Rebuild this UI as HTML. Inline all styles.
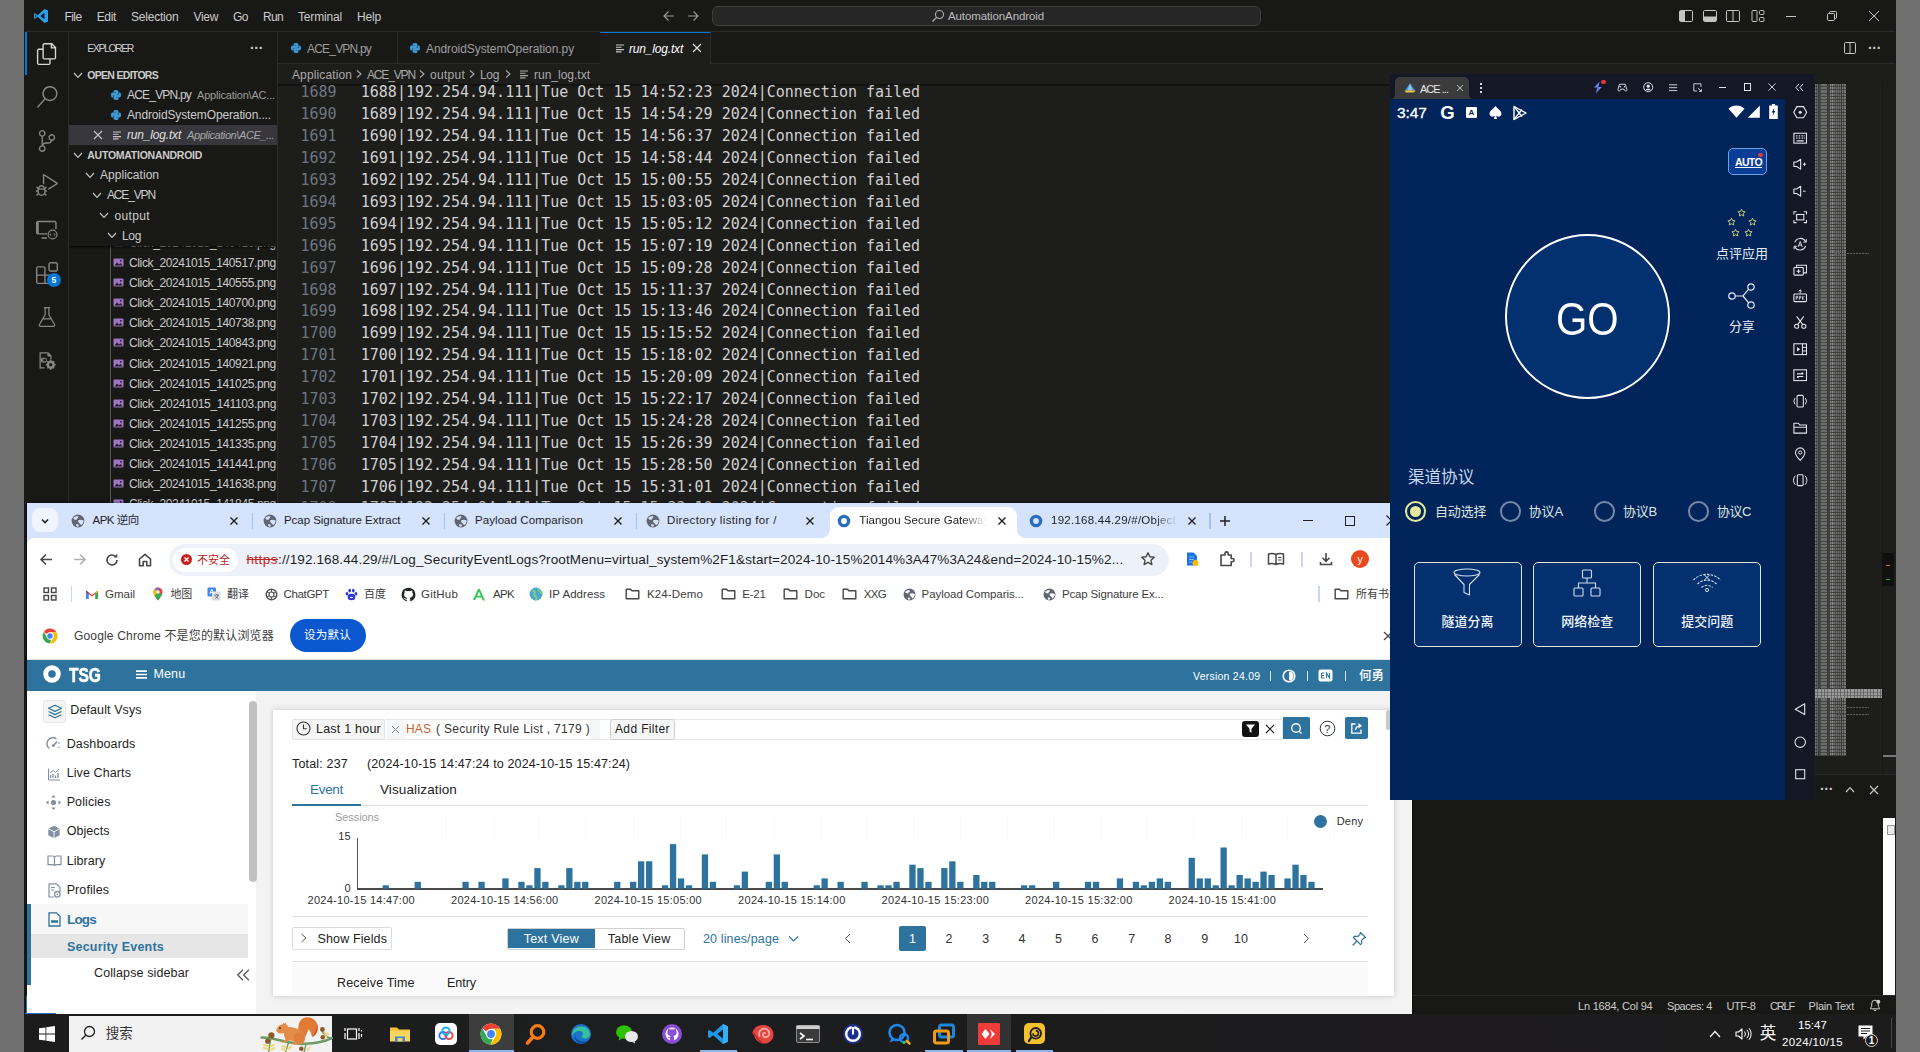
<!DOCTYPE html>
<html lang="zh"><head><meta charset="utf-8"><title>screen</title>
<style>
*{margin:0;padding:0;box-sizing:content-box}
html,body{width:1920px;height:1052px;overflow:hidden;background:#6f6f6f}
body{position:relative;font-family:"Liberation Sans","Noto Sans CJK SC",sans-serif}
.b{position:absolute;display:block}
.t{position:absolute;white-space:pre;display:block}
.s{font-family:"Liberation Sans","Noto Sans CJK SC",sans-serif}
.m{font-family:"Liberation Mono","Noto Sans CJK SC",monospace}
.dm{font-family:"DejaVu Sans Mono","Liberation Mono",monospace}
.ds{font-family:"DejaVu Sans","Noto Sans CJK SC",sans-serif}
svg{overflow:visible}
</style></head>
<body>
<div class="b" style="left:24.4px;top:0.0px;width:1871.3px;height:1013.5px;background:#181816;"></div><div class="b" style="left:277.0px;top:32.0px;width:1618.8px;height:963.0px;background:#1d1d1b;"></div><div class="b" style="left:25.0px;top:31.0px;width:1870.0px;height:1.0px;background:#2b2b2b;"></div><div class="b" style="left:68.0px;top:32.0px;width:1.0px;height:963.0px;background:#2b2b2b;"></div><div class="b" style="left:277.0px;top:32.0px;width:1.0px;height:963.0px;background:#2b2b2b;"></div><svg class="b" style="left:33.0px;top:8.0px;" width="16" height="16" viewBox="0 0 16 16"><path d="M11.5 1 L4.6 7.3 1.9 5.2 1 5.7v4.6l.9.5 2.7-2.1 6.9 6.3 3.5-1.6V2.6z M11.5 4.8v6.4L7.3 8z M1.9 9.6V6.4L3.5 8z" fill="#2ba0ef" fill-rule="evenodd"/></svg><span class="t s" style="left:64.4px;top:8.8px;font-size:12px;line-height:16px;color:#cccccc;letter-spacing:-0.51px;">File</span><span class="t s" style="left:96.7px;top:8.8px;font-size:12px;line-height:16px;color:#cccccc;letter-spacing:-0.34px;">Edit</span><span class="t s" style="left:131.0px;top:8.8px;font-size:12px;line-height:16px;color:#cccccc;letter-spacing:-0.21px;">Selection</span><span class="t s" style="left:193.5px;top:8.8px;font-size:12px;line-height:16px;color:#cccccc;letter-spacing:-0.32px;">View</span><span class="t s" style="left:233.0px;top:8.8px;font-size:12px;line-height:16px;color:#cccccc;letter-spacing:-0.50px;">Go</span><span class="t s" style="left:263.0px;top:8.8px;font-size:12px;line-height:16px;color:#cccccc;letter-spacing:-0.67px;">Run</span><span class="t s" style="left:298.0px;top:8.8px;font-size:12px;line-height:16px;color:#cccccc;letter-spacing:-0.17px;">Terminal</span><span class="t s" style="left:357.0px;top:8.8px;font-size:12px;line-height:16px;color:#cccccc;letter-spacing:-0.17px;">Help</span><svg class="b" style="left:661.0px;top:8.0px;" width="16" height="16" viewBox="0 0 16 16"><path d="M13 8H3.5M7.5 3.5 3 8l4.5 4.5" fill="none" stroke="#9a9a9a" stroke-width="1.1"/></svg><svg class="b" style="left:685.0px;top:8.0px;transform:scaleX(-1);" width="16" height="16" viewBox="0 0 16 16"><path d="M13 8H3.5M7.5 3.5 3 8l4.5 4.5" fill="none" stroke="#9a9a9a" stroke-width="1.1"/></svg><div class="b" style="left:711.5px;top:5.5px;width:549.0px;height:20.5px;background:#262626;border:1px solid #3e3e3e;border-radius:6px;box-sizing:border-box;"></div><svg class="b" style="left:931.0px;top:8.5px;" width="14" height="14" viewBox="0 0 14 14"><circle cx="8.5" cy="5.5" r="4" fill="none" stroke="#b4b4b4" stroke-width="1.1"/><path d="M5.6 8.4 1.5 12.5" stroke="#b4b4b4" stroke-width="1.2"/></svg><span class="t s" style="left:948.0px;top:8.7px;font-size:11.5px;line-height:15px;color:#bdbdbd;letter-spacing:-0.11px;">AutomationAndroid</span><svg class="b" style="left:1678.0px;top:8.0px;" width="16" height="16" viewBox="0 0 16 16"><rect x="1.5" y="2.5" width="13" height="11" rx="1.2" fill="none" stroke="#c4c4c4" stroke-width="1"/><rect x="2" y="3" width="5" height="10" fill="#c4c4c4"/></svg><svg class="b" style="left:1701.6px;top:8.0px;" width="16" height="16" viewBox="0 0 16 16"><rect x="1.5" y="2.5" width="13" height="11" rx="1.2" fill="none" stroke="#c4c4c4" stroke-width="1"/><rect x="2" y="8.5" width="12" height="4.5" fill="#c4c4c4"/></svg><svg class="b" style="left:1725.0px;top:8.0px;" width="16" height="16" viewBox="0 0 16 16"><rect x="1.5" y="2.5" width="13" height="11" rx="1.2" fill="none" stroke="#c4c4c4" stroke-width="1"/><path d="M8 2.5v11" stroke="#c4c4c4"/></svg><svg class="b" style="left:1749.5px;top:8.0px;" width="16" height="16" viewBox="0 0 16 16"><rect x="2" y="2.5" width="5" height="11" rx="1" fill="none" stroke="#c4c4c4"/><rect x="9.5" y="2.5" width="4.5" height="4" rx="1" fill="none" stroke="#c4c4c4"/><rect x="9.5" y="9.5" width="4.5" height="4" rx="1" fill="none" stroke="#c4c4c4"/></svg><div class="b" style="left:1786.0px;top:16.0px;width:10.0px;height:1.0px;background:#c4c4c4;"></div><svg class="b" style="left:1826.0px;top:10.0px;" width="12" height="12" viewBox="0 0 12 12"><rect x="1.5" y="3.5" width="7" height="7" rx="1" fill="none" stroke="#c4c4c4"/><path d="M3.5 3.5v-1a1 1 0 0 1 1-1h5a1 1 0 0 1 1 1v5a1 1 0 0 1-1 1h-1" fill="none" stroke="#c4c4c4"/></svg><svg class="b" style="left:1868.0px;top:10.0px;" width="12" height="12" viewBox="0 0 12 12"><path d="M1 1l10 10M11 1L1 11" stroke="#c4c4c4" stroke-width="1"/></svg><div class="b" style="left:24.5px;top:32.0px;width:2.0px;height:43.0px;background:#0078d4;"></div><svg class="b" style="left:35.7px;top:42.6px;" width="22" height="22" viewBox="0 0 24 24"><path d="M17.5 0h-9L7 1.5V6H2.5L1 7.5v15.07L2.5 24h12.07L16 22.57V18h4.7l1.3-1.43V4.5L17.5 0zm0 2.12l2.38 2.38H17.5V2.12zm-3 20.38h-12v-15H7v9.07L8.5 18h6v4.5zm6-6h-12v-15H16V6h4.5v10.5z" fill="#d7d7d7"/></svg><svg class="b" style="left:35.7px;top:86.0px;" width="22" height="22" viewBox="0 0 24 24"><path d="M15.25 0a8.25 8.25 0 0 0-6.18 13.72L1 22.88l1.12 1 8.05-9.12A8.251 8.251 0 1 0 15.25.01V0zm0 15a6.75 6.75 0 1 1 0-13.5 6.75 6.75 0 0 1 0 13.5z" fill="#868686"/></svg><svg class="b" style="left:35.7px;top:130.0px;" width="22" height="22" viewBox="0 0 24 24"><path d="M21.007 8.222A3.738 3.738 0 0 0 15.045 5.2a3.737 3.737 0 0 0 1.156 6.583 2.988 2.988 0 0 1-2.668 1.67h-2.99a4.456 4.456 0 0 0-2.989 1.165V7.4a3.737 3.737 0 1 0-1.494 0v9.117a3.776 3.776 0 1 0 1.816.099 2.99 2.99 0 0 1 2.668-1.667h2.99a4.484 4.484 0 0 0 4.223-3.039 3.736 3.736 0 0 0 3.25-3.687zM4.565 3.738a2.242 2.242 0 1 1 4.484 0 2.242 2.242 0 0 1-4.484 0zm4.484 16.441a2.242 2.242 0 1 1-4.484 0 2.242 2.242 0 0 1 4.484 0zm8.221-9.715a2.242 2.242 0 1 1 0-4.485 2.242 2.242 0 0 1 0 4.485z" fill="#868686"/></svg><svg class="b" style="left:35.7px;top:174.0px;" width="22" height="22" viewBox="0 0 24 24"><path d="M10.94 13.5l-1.32 1.32a3.73 3.73 0 0 0-7.24 0L1.06 13.5 0 14.56l1.72 1.72-.22.22V18H0v1.5h1.5v.08c.077.489.214.966.41 1.42L0 22.94 1.06 24l1.65-1.65A4.308 4.308 0 0 0 6 24a4.31 4.31 0 0 0 3.29-1.65L10.94 24 12 22.94 10.09 21c.198-.464.336-.951.41-1.45v-.1H12V18h-1.5v-1.5l-.22-.22L12 14.56l-1.06-1.06zM6 13.5a2.25 2.25 0 0 1 2.25 2.25h-4.5A2.25 2.25 0 0 1 6 13.5zm3 6a3.33 3.33 0 0 1-3 3 3.33 3.33 0 0 1-3-3v-2.25h6v2.25zm14.76-9.9v1.26L13.5 17.37V15.6l8.5-5.37L9 2v9.46a5.07 5.07 0 0 0-1.5-.72V.63L8.64 0l15.12 9.6z" fill="#868686"/></svg><svg class="b" style="left:35.7px;top:218.0px;" width="22" height="22" viewBox="0 0 24 24"><path d="M1.5 3h19.5l1.5 1.5V12h-1.5V4.500H3V16.500h9v1.500H1.500L0 16.500V4.500L1.500 3zM6 21h6v1.500H6V21z M18 12.500a5.500 5.500 0 1 0 0 11 5.500 5.500 0 0 0 0-11zm0 1.300a4.200 4.200 0 1 1 0 8.400 4.200 4.200 0 0 1 0-8.400z M16.300 16.300l-1.700 1.700 1.700 1.700.6-.6-1.100-1.100 1.100-1.100z M19.700 16.300l1.700 1.700-1.700 1.700-.6-.6 1.100-1.100-1.100-1.100z" fill="#868686" fill-rule="evenodd"/></svg><svg class="b" style="left:35.7px;top:262.0px;" width="22" height="22" viewBox="0 0 24 24"><path d="M13.5 1.500L15 0h7.500L24 1.500V9l-1.500 1.500H15L13.500 9V1.500zm1.500 0V9h7.500V1.500H15zM0 15V6l1.500-1.500H9L10.500 6v7.500H18l1.500 1.500v7.500L18 24H1.500L0 22.500V15zm9-1.500V6H1.500v7.500H9zM9 15H1.500v7.500H9V15zm1.500 7.500H18V15h-7.500v7.500z" fill="#868686" fill-rule="evenodd"/></svg><div class="b" style="left:47.0px;top:273.0px;width:14.0px;height:14.0px;background:#0078d4;border-radius:7px;"></div><span class="t s" style="left:51.6px;top:274.7px;font-size:8.5px;line-height:11px;color:#ffffff;font-weight:bold;">5</span><svg class="b" style="left:36.7px;top:307.0px;" width="20" height="20" viewBox="0 0 24 24"><path d="M8.250 0v1.500H9V9L2.300 20.700A2.200 2.200 0 0 0 4.200 24h15.600a2.200 2.200 0 0 0 1.900-3.300L15 9V1.500h.750V0h-7.500zm2.250 9.400V1.500h3v7.900l2.300 4.100H8.200l2.300-4.100zM7.300 15h9.400l3.700 6.400a.700.700 0 0 1-.600 1.100H4.200a.700.700 0 0 1-.600-1.100L7.300 15z" fill="#868686" fill-rule="evenodd"/></svg><svg class="b" style="left:36.7px;top:350.5px;" width="20" height="20" viewBox="0 0 24 24"><path d="M3 1.500h10.500l4 4V10H16V6.500h-3.500V3H4.500v16.500H9V21H3V1.500z M6.500 8.500h2.300a3 3 0 1 0 0 5H6.500 M16.500 11.500a5 5 0 1 0 0 10 5 5 0 0 0 0-10zm0 3a2 2 0 1 1 0 4 2 2 0 0 1 0-4z" fill="#868686" fill-rule="evenodd"/><circle cx="9" cy="11" r="2.300" fill="none" stroke="#868686" stroke-width="1.300"/><path d="M16.500 10.300v2M16.500 20.700v2M10.500 16.500h2M20.500 16.500h2M12.300 12.300l1.400 1.400M19.300 19.300l1.400 1.400M12.300 20.700l1.400-1.400M19.300 13.700l1.400-1.400" stroke="#868686" stroke-width="1.500"/></svg><span class="t s" style="left:87.3px;top:41.2px;font-size:10.5px;line-height:14px;color:#cccccc;letter-spacing:-1.44px;">EXPLORER</span><span class="t s" style="left:250.0px;top:39.1px;font-size:14px;line-height:18px;color:#cccccc;letter-spacing:-0.33px;font-weight:bold;">···</span><svg class="b" style="left:72.0px;top:68.5px;" width="12" height="12" viewBox="0 0 12 12"><path d="M2 4l4 4.300L10 4" fill="none" stroke="#c5c5c5" stroke-width="1.200"/></svg><span class="t s" style="left:87.3px;top:67.6px;font-size:10.5px;line-height:14px;color:#cccccc;letter-spacing:-0.70px;font-weight:bold;">OPEN EDITORS</span><svg class="b" style="left:109.8px;top:88.5px;" width="12" height="12" viewBox="0 0 12 12"><path d="M5.900 1C3.500 1 3.600 2.100 3.600 2.100v1.100h2.400v.400H2.600S1 3.400 1 6s1.400 2.500 1.400 2.500h.900V7.300s0-1.400 1.400-1.400h2.400s1.300 0 1.300-1.300V2.400S8.600 1 5.900 1z" fill="#3c99d4"/><path d="M6.100 11c2.400 0 2.300-1.100 2.300-1.100V8.800H6v-.400h3.400S11 8.600 11 6 9.600 3.500 9.600 3.500h-.900v1.200s0 1.400-1.400 1.400H4.900s-1.300 0-1.300 1.300v2.200S3.400 11 6.100 11z" fill="#3c99d4"/></svg><span class="t s" style="left:127.0px;top:87.1px;font-size:12px;line-height:16px;color:#cccccc;letter-spacing:-0.80px;">ACE_VPN.py</span><span class="t s" style="left:197.0px;top:88.4px;font-size:11px;line-height:14px;color:#9d9d9d;letter-spacing:-0.20px;">Application\AC...</span><svg class="b" style="left:109.8px;top:108.5px;" width="12" height="12" viewBox="0 0 12 12"><path d="M5.900 1C3.500 1 3.600 2.100 3.600 2.100v1.100h2.400v.400H2.600S1 3.400 1 6s1.400 2.500 1.400 2.500h.900V7.300s0-1.400 1.400-1.400h2.400s1.300 0 1.300-1.300V2.400S8.600 1 5.900 1z" fill="#3c99d4"/><path d="M6.100 11c2.400 0 2.300-1.100 2.300-1.100V8.800H6v-.400h3.400S11 8.600 11 6 9.600 3.500 9.600 3.500h-.900v1.200s0 1.400-1.400 1.400H4.900s-1.300 0-1.300 1.300v2.200S3.400 11 6.100 11z" fill="#3c99d4"/></svg><span class="t s" style="left:127.0px;top:107.0px;font-size:12px;line-height:16px;color:#cccccc;letter-spacing:-0.13px;">AndroidSystemOperation....</span><div class="b" style="left:69.0px;top:124.5px;width:208.0px;height:20.0px;background:#37373d;"></div><svg class="b" style="left:93.0px;top:129.7px;" width="10" height="10" viewBox="0 0 10 10"><path d="M1 1l8 8M9 1L1 9" stroke="#c5c5c5" stroke-width="1.100"/></svg><svg class="b" style="left:112.0px;top:129.7px;" width="10" height="10" viewBox="0 0 10 10"><path d="M1 2h8M1 4.300h5.500M1 6.600h8M1 8.900h5.500" stroke="#c5c5c5" stroke-width="1.100"/></svg><span class="t s" style="left:127.0px;top:127.1px;font-size:12px;line-height:16px;color:#e0e0e0;letter-spacing:-0.18px;font-style:italic;">run_log.txt</span><span class="t s" style="left:187.0px;top:128.4px;font-size:11px;line-height:14px;color:#a8a8a8;letter-spacing:-0.41px;font-style:italic;">Application\ACE_...</span><svg class="b" style="left:72.0px;top:149.0px;" width="12" height="12" viewBox="0 0 12 12"><path d="M2 4l4 4.300L10 4" fill="none" stroke="#c5c5c5" stroke-width="1.200"/></svg><span class="t s" style="left:87.3px;top:148.2px;font-size:10.5px;line-height:14px;color:#cccccc;letter-spacing:-0.26px;font-weight:bold;">AUTOMATIONANDROID</span><svg class="b" style="left:84.0px;top:169.2px;" width="12" height="12" viewBox="0 0 12 12"><path d="M2 4l4 4.300L10 4" fill="none" stroke="#c5c5c5" stroke-width="1.200"/></svg><span class="t s" style="left:100.0px;top:167.4px;font-size:12px;line-height:16px;color:#cccccc;letter-spacing:0.03px;">Application</span><svg class="b" style="left:91.0px;top:189.2px;" width="12" height="12" viewBox="0 0 12 12"><path d="M2 4l4 4.300L10 4" fill="none" stroke="#c5c5c5" stroke-width="1.200"/></svg><span class="t s" style="left:107.0px;top:187.4px;font-size:12px;line-height:16px;color:#cccccc;letter-spacing:-1.15px;">ACE_VPN</span><svg class="b" style="left:98.0px;top:209.3px;" width="12" height="12" viewBox="0 0 12 12"><path d="M2 4l4 4.300L10 4" fill="none" stroke="#c5c5c5" stroke-width="1.200"/></svg><span class="t s" style="left:114.6px;top:207.5px;font-size:12px;line-height:16px;color:#cccccc;letter-spacing:0.34px;">output</span><svg class="b" style="left:105.5px;top:229.4px;" width="12" height="12" viewBox="0 0 12 12"><path d="M2 4l4 4.300L10 4" fill="none" stroke="#c5c5c5" stroke-width="1.200"/></svg><span class="t s" style="left:122.0px;top:227.6px;font-size:12px;line-height:16px;color:#cccccc;letter-spacing:-0.34px;">Log</span><div class="b" style="left:69.0px;top:245.5px;width:208.0px;height:260.0px;overflow:hidden;"><div class="b" style="left:40.5px;top:0.0px;width:1.0px;height:260.0px;background:#585858;"></div><svg class="b" style="left:43.5px;top:-8.7px;" width="11" height="11" viewBox="0 0 11 11"><rect x="0.500" y="1.500" width="10" height="8" rx="1" fill="#a074c4"/><path d="M1.500 8.500l2.500-3 2 2 1.500-1.500 2 2.500z" fill="#1f1f1f"/><circle cx="7.800" cy="3.800" r="0.900" fill="#1f1f1f"/></svg><span class="t s" style="left:60.0px;top:-10.7px;font-size:12px;line-height:16px;color:#cccccc;letter-spacing:-0.37px;">Click_20241015_140416.png</span><svg class="b" style="left:43.5px;top:11.4px;" width="11" height="11" viewBox="0 0 11 11"><rect x="0.500" y="1.500" width="10" height="8" rx="1" fill="#a074c4"/><path d="M1.500 8.500l2.500-3 2 2 1.500-1.500 2 2.500z" fill="#1f1f1f"/><circle cx="7.800" cy="3.800" r="0.900" fill="#1f1f1f"/></svg><span class="t s" style="left:60.0px;top:9.5px;font-size:12px;line-height:16px;color:#cccccc;letter-spacing:-0.37px;">Click_20241015_140517.png</span><svg class="b" style="left:43.5px;top:31.5px;" width="11" height="11" viewBox="0 0 11 11"><rect x="0.500" y="1.500" width="10" height="8" rx="1" fill="#a074c4"/><path d="M1.500 8.500l2.500-3 2 2 1.500-1.500 2 2.500z" fill="#1f1f1f"/><circle cx="7.800" cy="3.800" r="0.900" fill="#1f1f1f"/></svg><span class="t s" style="left:60.0px;top:29.6px;font-size:12px;line-height:16px;color:#cccccc;letter-spacing:-0.37px;">Click_20241015_140555.png</span><svg class="b" style="left:43.5px;top:51.7px;" width="11" height="11" viewBox="0 0 11 11"><rect x="0.500" y="1.500" width="10" height="8" rx="1" fill="#a074c4"/><path d="M1.500 8.500l2.500-3 2 2 1.500-1.500 2 2.500z" fill="#1f1f1f"/><circle cx="7.800" cy="3.800" r="0.900" fill="#1f1f1f"/></svg><span class="t s" style="left:60.0px;top:49.7px;font-size:12px;line-height:16px;color:#cccccc;letter-spacing:-0.37px;">Click_20241015_140700.png</span><svg class="b" style="left:43.5px;top:71.8px;" width="11" height="11" viewBox="0 0 11 11"><rect x="0.500" y="1.500" width="10" height="8" rx="1" fill="#a074c4"/><path d="M1.500 8.500l2.500-3 2 2 1.500-1.500 2 2.500z" fill="#1f1f1f"/><circle cx="7.800" cy="3.800" r="0.900" fill="#1f1f1f"/></svg><span class="t s" style="left:60.0px;top:69.8px;font-size:12px;line-height:16px;color:#cccccc;letter-spacing:-0.37px;">Click_20241015_140738.png</span><svg class="b" style="left:43.5px;top:91.9px;" width="11" height="11" viewBox="0 0 11 11"><rect x="0.500" y="1.500" width="10" height="8" rx="1" fill="#a074c4"/><path d="M1.500 8.500l2.500-3 2 2 1.500-1.500 2 2.500z" fill="#1f1f1f"/><circle cx="7.800" cy="3.800" r="0.900" fill="#1f1f1f"/></svg><span class="t s" style="left:60.0px;top:89.9px;font-size:12px;line-height:16px;color:#cccccc;letter-spacing:-0.37px;">Click_20241015_140843.png</span><svg class="b" style="left:43.5px;top:112.0px;" width="11" height="11" viewBox="0 0 11 11"><rect x="0.500" y="1.500" width="10" height="8" rx="1" fill="#a074c4"/><path d="M1.500 8.500l2.500-3 2 2 1.500-1.500 2 2.500z" fill="#1f1f1f"/><circle cx="7.800" cy="3.800" r="0.900" fill="#1f1f1f"/></svg><span class="t s" style="left:60.0px;top:110.1px;font-size:12px;line-height:16px;color:#cccccc;letter-spacing:-0.37px;">Click_20241015_140921.png</span><svg class="b" style="left:43.5px;top:132.1px;" width="11" height="11" viewBox="0 0 11 11"><rect x="0.500" y="1.500" width="10" height="8" rx="1" fill="#a074c4"/><path d="M1.500 8.500l2.500-3 2 2 1.500-1.500 2 2.500z" fill="#1f1f1f"/><circle cx="7.800" cy="3.800" r="0.900" fill="#1f1f1f"/></svg><span class="t s" style="left:60.0px;top:130.2px;font-size:12px;line-height:16px;color:#cccccc;letter-spacing:-0.37px;">Click_20241015_141025.png</span><svg class="b" style="left:43.5px;top:152.3px;" width="11" height="11" viewBox="0 0 11 11"><rect x="0.500" y="1.500" width="10" height="8" rx="1" fill="#a074c4"/><path d="M1.500 8.500l2.500-3 2 2 1.500-1.500 2 2.500z" fill="#1f1f1f"/><circle cx="7.800" cy="3.800" r="0.900" fill="#1f1f1f"/></svg><span class="t s" style="left:60.0px;top:150.3px;font-size:12px;line-height:16px;color:#cccccc;letter-spacing:-0.33px;">Click_20241015_141103.png</span><svg class="b" style="left:43.5px;top:172.4px;" width="11" height="11" viewBox="0 0 11 11"><rect x="0.500" y="1.500" width="10" height="8" rx="1" fill="#a074c4"/><path d="M1.500 8.500l2.500-3 2 2 1.500-1.500 2 2.500z" fill="#1f1f1f"/><circle cx="7.800" cy="3.800" r="0.900" fill="#1f1f1f"/></svg><span class="t s" style="left:60.0px;top:170.4px;font-size:12px;line-height:16px;color:#cccccc;letter-spacing:-0.37px;">Click_20241015_141255.png</span><svg class="b" style="left:43.5px;top:192.5px;" width="11" height="11" viewBox="0 0 11 11"><rect x="0.500" y="1.500" width="10" height="8" rx="1" fill="#a074c4"/><path d="M1.500 8.500l2.500-3 2 2 1.500-1.500 2 2.500z" fill="#1f1f1f"/><circle cx="7.800" cy="3.800" r="0.900" fill="#1f1f1f"/></svg><span class="t s" style="left:60.0px;top:190.5px;font-size:12px;line-height:16px;color:#cccccc;letter-spacing:-0.37px;">Click_20241015_141335.png</span><svg class="b" style="left:43.5px;top:212.6px;" width="11" height="11" viewBox="0 0 11 11"><rect x="0.500" y="1.500" width="10" height="8" rx="1" fill="#a074c4"/><path d="M1.500 8.500l2.500-3 2 2 1.500-1.500 2 2.500z" fill="#1f1f1f"/><circle cx="7.800" cy="3.800" r="0.900" fill="#1f1f1f"/></svg><span class="t s" style="left:60.0px;top:210.7px;font-size:12px;line-height:16px;color:#cccccc;letter-spacing:-0.37px;">Click_20241015_141441.png</span><svg class="b" style="left:43.5px;top:232.7px;" width="11" height="11" viewBox="0 0 11 11"><rect x="0.500" y="1.500" width="10" height="8" rx="1" fill="#a074c4"/><path d="M1.500 8.500l2.500-3 2 2 1.500-1.500 2 2.500z" fill="#1f1f1f"/><circle cx="7.800" cy="3.800" r="0.900" fill="#1f1f1f"/></svg><span class="t s" style="left:60.0px;top:230.8px;font-size:12px;line-height:16px;color:#cccccc;letter-spacing:-0.37px;">Click_20241015_141638.png</span><svg class="b" style="left:43.5px;top:252.9px;" width="11" height="11" viewBox="0 0 11 11"><rect x="0.500" y="1.500" width="10" height="8" rx="1" fill="#a074c4"/><path d="M1.500 8.500l2.500-3 2 2 1.500-1.500 2 2.500z" fill="#1f1f1f"/><circle cx="7.800" cy="3.800" r="0.900" fill="#1f1f1f"/></svg><span class="t s" style="left:60.0px;top:250.9px;font-size:12px;line-height:16px;color:#cccccc;letter-spacing:-0.37px;">Click_20241015_141845.png</span></div><div class="b" style="left:69.0px;top:245.5px;width:208.0px;height:3.0px;background:linear-gradient(#000000aa,#00000000);"></div><div class="b" style="left:278.0px;top:32.0px;width:1617.8px;height:32.0px;background:#181816;"></div><div class="b" style="left:278.0px;top:63.0px;width:1617.0px;height:1.0px;background:#2b2b2b;"></div><div class="b" style="left:397.0px;top:32.0px;width:1.0px;height:31.0px;background:#2b2b2b;"></div><div class="b" style="left:600.0px;top:32.0px;width:1.0px;height:31.0px;background:#2b2b2b;"></div><div class="b" style="left:600.0px;top:32.0px;width:110.0px;height:32.0px;background:#1d1d1b;"></div><div class="b" style="left:600.0px;top:32.0px;width:110.0px;height:1.0px;background:#0078d4;"></div><div class="b" style="left:709.5px;top:32.0px;width:1.0px;height:31.0px;background:#2b2b2b;"></div><svg class="b" style="left:290.0px;top:41.5px;" width="12" height="12" viewBox="0 0 12 12"><path d="M5.900 1C3.500 1 3.600 2.100 3.600 2.100v1.100h2.400v.400H2.600S1 3.400 1 6s1.400 2.500 1.400 2.500h.900V7.300s0-1.400 1.400-1.400h2.400s1.300 0 1.300-1.300V2.400S8.600 1 5.900 1z" fill="#3c99d4"/><path d="M6.100 11c2.400 0 2.300-1.100 2.300-1.100V8.800H6v-.400h3.400S11 8.600 11 6 9.600 3.500 9.600 3.500h-.900v1.200s0 1.400-1.400 1.400H4.900s-1.300 0-1.300 1.300v2.200S3.400 11 6.100 11z" fill="#3c99d4"/></svg><span class="t s" style="left:307.0px;top:40.9px;font-size:12px;line-height:16px;color:#9d9d9d;letter-spacing:-0.80px;">ACE_VPN.py</span><svg class="b" style="left:409.0px;top:41.5px;" width="12" height="12" viewBox="0 0 12 12"><path d="M5.900 1C3.500 1 3.600 2.100 3.600 2.100v1.100h2.400v.400H2.600S1 3.400 1 6s1.400 2.500 1.400 2.500h.900V7.300s0-1.400 1.400-1.400h2.400s1.300 0 1.300-1.300V2.400S8.600 1 5.900 1z" fill="#3c99d4"/><path d="M6.100 11c2.400 0 2.300-1.100 2.300-1.100V8.800H6v-.400h3.400S11 8.600 11 6 9.600 3.500 9.600 3.500h-.900v1.200s0 1.400-1.400 1.400H4.900s-1.300 0-1.300 1.300v2.200S3.400 11 6.100 11z" fill="#3c99d4"/></svg><span class="t s" style="left:426.0px;top:40.9px;font-size:12px;line-height:16px;color:#9d9d9d;letter-spacing:-0.08px;">AndroidSystemOperation.py</span><svg class="b" style="left:615.0px;top:43.0px;" width="10" height="10" viewBox="0 0 10 10"><path d="M1 2h8M1 4.300h5.500M1 6.600h8M1 8.900h5.500" stroke="#c5c5c5" stroke-width="1.100"/></svg><span class="t s" style="left:629.0px;top:40.9px;font-size:12px;line-height:16px;color:#ffffff;letter-spacing:-0.18px;font-style:italic;">run_log.txt</span><svg class="b" style="left:692.0px;top:43.0px;" width="10" height="10" viewBox="0 0 10 10"><path d="M1 1l8 8M9 1L1 9" stroke="#e0e0e0" stroke-width="1.200"/></svg><svg class="b" style="left:1843.0px;top:41.0px;" width="14" height="14" viewBox="0 0 14 14"><rect x="1.500" y="1.500" width="11" height="11" rx="1.200" fill="none" stroke="#c4c4c4"/><path d="M7 1.500v11" stroke="#c4c4c4"/></svg><span class="t s" style="left:1868.0px;top:39.1px;font-size:14px;line-height:18px;color:#cccccc;letter-spacing:-0.33px;font-weight:bold;">···</span><span class="t s" style="left:292.0px;top:67.1px;font-size:12px;line-height:16px;color:#a9a9a9;letter-spacing:0.12px;">Application</span><span class="t s" style="left:367.0px;top:67.1px;font-size:12px;line-height:16px;color:#a9a9a9;letter-spacing:-1.15px;">ACE_VPN</span><span class="t s" style="left:430.0px;top:67.1px;font-size:12px;line-height:16px;color:#a9a9a9;letter-spacing:0.27px;">output</span><span class="t s" style="left:480.0px;top:67.1px;font-size:12px;line-height:16px;color:#a9a9a9;letter-spacing:-0.34px;">Log</span><span class="t s" style="left:534.0px;top:67.1px;font-size:12px;line-height:16px;color:#a9a9a9;">run_log.txt</span><svg class="b" style="left:353.5px;top:69.0px;" width="10" height="10" viewBox="0 0 10 10"><path d="M3 1.500L7 5 3 8.500" fill="none" stroke="#a9a9a9" stroke-width="1.100"/></svg><svg class="b" style="left:416.5px;top:69.0px;" width="10" height="10" viewBox="0 0 10 10"><path d="M3 1.500L7 5 3 8.500" fill="none" stroke="#a9a9a9" stroke-width="1.100"/></svg><svg class="b" style="left:466.5px;top:69.0px;" width="10" height="10" viewBox="0 0 10 10"><path d="M3 1.500L7 5 3 8.500" fill="none" stroke="#a9a9a9" stroke-width="1.100"/></svg><svg class="b" style="left:502.5px;top:69.0px;" width="10" height="10" viewBox="0 0 10 10"><path d="M3 1.500L7 5 3 8.500" fill="none" stroke="#a9a9a9" stroke-width="1.100"/></svg><svg class="b" style="left:519.0px;top:69.3px;" width="10" height="10" viewBox="0 0 10 10"><path d="M1 2h8M1 4.300h5.500M1 6.600h8M1 8.900h5.500" stroke="#a9a9a9" stroke-width="1.100"/></svg><div class="b" style="left:278.0px;top:84.0px;width:1537.0px;height:3.0px;background:linear-gradient(#00000088,#00000000);"></div>
<div class="b" style="left:277.0px;top:84.0px;width:1538.0px;height:420.0px;overflow:hidden;"><span class="t dm" style="left:23.5px;top:-1.6px;font-size:15px;line-height:20px;color:#6e7681;letter-spacing:-0.03px;">1689</span><span class="t dm" style="left:83.8px;top:-1.6px;font-size:15px;line-height:20px;color:#d0d0d0;letter-spacing:-0.01px;">1688|192.254.94.111|Tue Oct 15 14:52:23 2024|Connection failed</span><span class="t dm" style="left:23.5px;top:20.3px;font-size:15px;line-height:20px;color:#6e7681;letter-spacing:-0.03px;">1690</span><span class="t dm" style="left:83.8px;top:20.3px;font-size:15px;line-height:20px;color:#d0d0d0;letter-spacing:-0.01px;">1689|192.254.94.111|Tue Oct 15 14:54:29 2024|Connection failed</span><span class="t dm" style="left:23.5px;top:42.2px;font-size:15px;line-height:20px;color:#6e7681;letter-spacing:-0.03px;">1691</span><span class="t dm" style="left:83.8px;top:42.2px;font-size:15px;line-height:20px;color:#d0d0d0;letter-spacing:-0.01px;">1690|192.254.94.111|Tue Oct 15 14:56:37 2024|Connection failed</span><span class="t dm" style="left:23.5px;top:64.1px;font-size:15px;line-height:20px;color:#6e7681;letter-spacing:-0.03px;">1692</span><span class="t dm" style="left:83.8px;top:64.1px;font-size:15px;line-height:20px;color:#d0d0d0;letter-spacing:-0.01px;">1691|192.254.94.111|Tue Oct 15 14:58:44 2024|Connection failed</span><span class="t dm" style="left:23.5px;top:86.0px;font-size:15px;line-height:20px;color:#6e7681;letter-spacing:-0.03px;">1693</span><span class="t dm" style="left:83.8px;top:86.0px;font-size:15px;line-height:20px;color:#d0d0d0;letter-spacing:-0.01px;">1692|192.254.94.111|Tue Oct 15 15:00:55 2024|Connection failed</span><span class="t dm" style="left:23.5px;top:107.9px;font-size:15px;line-height:20px;color:#6e7681;letter-spacing:-0.03px;">1694</span><span class="t dm" style="left:83.8px;top:107.9px;font-size:15px;line-height:20px;color:#d0d0d0;letter-spacing:-0.01px;">1693|192.254.94.111|Tue Oct 15 15:03:05 2024|Connection failed</span><span class="t dm" style="left:23.5px;top:129.8px;font-size:15px;line-height:20px;color:#6e7681;letter-spacing:-0.03px;">1695</span><span class="t dm" style="left:83.8px;top:129.8px;font-size:15px;line-height:20px;color:#d0d0d0;letter-spacing:-0.01px;">1694|192.254.94.111|Tue Oct 15 15:05:12 2024|Connection failed</span><span class="t dm" style="left:23.5px;top:151.7px;font-size:15px;line-height:20px;color:#6e7681;letter-spacing:-0.03px;">1696</span><span class="t dm" style="left:83.8px;top:151.7px;font-size:15px;line-height:20px;color:#d0d0d0;letter-spacing:-0.01px;">1695|192.254.94.111|Tue Oct 15 15:07:19 2024|Connection failed</span><span class="t dm" style="left:23.5px;top:173.6px;font-size:15px;line-height:20px;color:#6e7681;letter-spacing:-0.03px;">1697</span><span class="t dm" style="left:83.8px;top:173.6px;font-size:15px;line-height:20px;color:#d0d0d0;letter-spacing:-0.01px;">1696|192.254.94.111|Tue Oct 15 15:09:28 2024|Connection failed</span><span class="t dm" style="left:23.5px;top:195.5px;font-size:15px;line-height:20px;color:#6e7681;letter-spacing:-0.03px;">1698</span><span class="t dm" style="left:83.8px;top:195.5px;font-size:15px;line-height:20px;color:#d0d0d0;letter-spacing:-0.01px;">1697|192.254.94.111|Tue Oct 15 15:11:37 2024|Connection failed</span><span class="t dm" style="left:23.5px;top:217.3px;font-size:15px;line-height:20px;color:#6e7681;letter-spacing:-0.03px;">1699</span><span class="t dm" style="left:83.8px;top:217.3px;font-size:15px;line-height:20px;color:#d0d0d0;letter-spacing:-0.01px;">1698|192.254.94.111|Tue Oct 15 15:13:46 2024|Connection failed</span><span class="t dm" style="left:23.5px;top:239.2px;font-size:15px;line-height:20px;color:#6e7681;letter-spacing:-0.03px;">1700</span><span class="t dm" style="left:83.8px;top:239.2px;font-size:15px;line-height:20px;color:#d0d0d0;letter-spacing:-0.01px;">1699|192.254.94.111|Tue Oct 15 15:15:52 2024|Connection failed</span><span class="t dm" style="left:23.5px;top:261.1px;font-size:15px;line-height:20px;color:#6e7681;letter-spacing:-0.03px;">1701</span><span class="t dm" style="left:83.8px;top:261.1px;font-size:15px;line-height:20px;color:#d0d0d0;letter-spacing:-0.01px;">1700|192.254.94.111|Tue Oct 15 15:18:02 2024|Connection failed</span><span class="t dm" style="left:23.5px;top:283.0px;font-size:15px;line-height:20px;color:#6e7681;letter-spacing:-0.03px;">1702</span><span class="t dm" style="left:83.8px;top:283.0px;font-size:15px;line-height:20px;color:#d0d0d0;letter-spacing:-0.01px;">1701|192.254.94.111|Tue Oct 15 15:20:09 2024|Connection failed</span><span class="t dm" style="left:23.5px;top:304.9px;font-size:15px;line-height:20px;color:#6e7681;letter-spacing:-0.03px;">1703</span><span class="t dm" style="left:83.8px;top:304.9px;font-size:15px;line-height:20px;color:#d0d0d0;letter-spacing:-0.01px;">1702|192.254.94.111|Tue Oct 15 15:22:17 2024|Connection failed</span><span class="t dm" style="left:23.5px;top:326.8px;font-size:15px;line-height:20px;color:#6e7681;letter-spacing:-0.03px;">1704</span><span class="t dm" style="left:83.8px;top:326.8px;font-size:15px;line-height:20px;color:#d0d0d0;letter-spacing:-0.01px;">1703|192.254.94.111|Tue Oct 15 15:24:28 2024|Connection failed</span><span class="t dm" style="left:23.5px;top:348.7px;font-size:15px;line-height:20px;color:#6e7681;letter-spacing:-0.03px;">1705</span><span class="t dm" style="left:83.8px;top:348.7px;font-size:15px;line-height:20px;color:#d0d0d0;letter-spacing:-0.01px;">1704|192.254.94.111|Tue Oct 15 15:26:39 2024|Connection failed</span><span class="t dm" style="left:23.5px;top:370.6px;font-size:15px;line-height:20px;color:#6e7681;letter-spacing:-0.03px;">1706</span><span class="t dm" style="left:83.8px;top:370.6px;font-size:15px;line-height:20px;color:#d0d0d0;letter-spacing:-0.01px;">1705|192.254.94.111|Tue Oct 15 15:28:50 2024|Connection failed</span><span class="t dm" style="left:23.5px;top:392.5px;font-size:15px;line-height:20px;color:#6e7681;letter-spacing:-0.03px;">1707</span><span class="t dm" style="left:83.8px;top:392.5px;font-size:15px;line-height:20px;color:#d0d0d0;letter-spacing:-0.01px;">1706|192.254.94.111|Tue Oct 15 15:31:01 2024|Connection failed</span><span class="t dm" style="left:23.5px;top:414.4px;font-size:15px;line-height:20px;color:#6e7681;letter-spacing:-0.03px;">1708</span><span class="t dm" style="left:83.8px;top:414.4px;font-size:15px;line-height:20px;color:#d0d0d0;letter-spacing:-0.01px;">1707|192.254.94.111|Tue Oct 15 15:33:10 2024|Connection failed</span></div>
<div class="b" style="left:1814.8px;top:84.0px;width:31.4px;height:672.0px;background:repeating-linear-gradient(to bottom,#454543 0,#454543 2.300px,#484846 2.300px,#484846 3.200px);"></div><div class="b" style="left:1814.8px;top:84.0px;width:3.6px;height:672.0px;background:repeating-linear-gradient(to bottom,#707070 0,#707070 2.300px,#484846 2.300px,#484846 3.200px);"></div><div class="b" style="left:1820.3px;top:84.0px;width:6.6px;height:672.0px;background:repeating-linear-gradient(to bottom,#6c6c6c 0,#6c6c6c 2.300px,#484846 2.300px,#484846 3.200px);"></div><div class="b" style="left:1829.6px;top:84.0px;width:4.8px;height:672.0px;background:repeating-linear-gradient(to bottom,#8c8c8c 0,#8c8c8c 2.300px,#484846 2.300px,#484846 3.200px);"></div><div class="b" style="left:1834.4px;top:84.0px;width:6.2px;height:672.0px;background:repeating-linear-gradient(to bottom,#6e6e6e 0,#6e6e6e 2.300px,#484846 2.300px,#484846 3.200px);"></div><div class="b" style="left:1842.2px;top:84.0px;width:4.0px;height:672.0px;background:repeating-linear-gradient(to bottom,#747474 0,#747474 2.300px,#484846 2.300px,#484846 3.200px);"></div><div class="b" style="left:1814.8px;top:84.0px;width:31.4px;height:672.0px;background:repeating-linear-gradient(to right,transparent 0,transparent 1.200px,rgba(30,30,28,.4) 1.200px,rgba(30,30,28,.4) 2.100px);"></div><div class="b" style="left:1814.8px;top:689.0px;width:68.0px;height:8.6px;background:repeating-linear-gradient(to right,#9a9a9a 0,#9a9a9a 2.300px,#6a6a6a 2.300px,#6a6a6a 3.300px);"></div><div class="b" style="left:1814.8px;top:691.5px;width:68.0px;height:0.8px;background:#55555388;"></div><div class="b" style="left:1814.8px;top:694.7px;width:68.0px;height:0.8px;background:#55555388;"></div><div class="b" style="left:1835.0px;top:252.5px;width:34.0px;height:1.2px;background:repeating-linear-gradient(to right,#5c5c5c 0,#5c5c5c 2px,#2c2c2a 2px,#2c2c2a 3px);"></div><div class="b" style="left:1835.0px;top:706.5px;width:34.0px;height:1.2px;background:repeating-linear-gradient(to right,#5c5c5c 0,#5c5c5c 2px,#2c2c2a 2px,#2c2c2a 3px);"></div><div class="b" style="left:1835.0px;top:714.0px;width:34.0px;height:1.2px;background:repeating-linear-gradient(to right,#5c5c5c 0,#5c5c5c 2px,#2c2c2a 2px,#2c2c2a 3px);"></div><div class="b" style="left:1882.3px;top:84.0px;width:1.0px;height:690.0px;background:#161716;"></div><div class="b" style="left:1883.0px;top:755.0px;width:12.5px;height:2.2px;background:#777;"></div><div class="b" style="left:1882.0px;top:553.0px;width:12.0px;height:33.0px;background:#101010;border-radius:2px;"></div><div class="b" style="left:1886.0px;top:565.0px;width:4.0px;height:1.0px;background:#c08030;"></div><div class="b" style="left:1886.0px;top:579.0px;width:4.0px;height:1.0px;background:#30a030;"></div><div class="b" style="left:1814.5px;top:774.0px;width:81.0px;height:221.0px;background:#181816;"></div><div class="b" style="left:1814.5px;top:773.5px;width:81.0px;height:1.0px;background:#2b2b2b;"></div><div class="b" style="left:1412.0px;top:800.0px;width:483.0px;height:195.0px;background:#181816;"></div><span class="t s" style="left:1820.0px;top:779.8px;font-size:14px;line-height:18px;color:#cccccc;letter-spacing:-0.33px;font-weight:bold;">···</span><svg class="b" style="left:1844.0px;top:784.0px;" width="12" height="12" viewBox="0 0 12 12"><path d="M2 8l4-4.300L10 8" fill="none" stroke="#c5c5c5" stroke-width="1.200"/></svg><svg class="b" style="left:1869.0px;top:785.0px;" width="10" height="10" viewBox="0 0 10 10"><path d="M1 1l8 8M9 1L1 9" stroke="#c5c5c5" stroke-width="1.200"/></svg><div class="b" style="left:1883.0px;top:818.0px;width:12.0px;height:177.0px;background:#ffffff;"></div><div class="b" style="left:1887.0px;top:825.0px;width:8.0px;height:10.0px;background:#e8e8e8;border:1px solid #999;box-sizing:border-box;"></div><div class="b" style="left:25.0px;top:994.5px;width:1870.0px;height:1.0px;background:#2b2b2b;"></div><span class="t s" style="left:1578.0px;top:998.7px;font-size:11px;line-height:14px;color:#cccccc;letter-spacing:-0.21px;">Ln 1684, Col 94</span><span class="t s" style="left:1667.0px;top:998.7px;font-size:11px;line-height:14px;color:#cccccc;letter-spacing:-0.44px;">Spaces: 4</span><span class="t s" style="left:1726.5px;top:998.7px;font-size:11px;line-height:14px;color:#cccccc;letter-spacing:-0.43px;">UTF-8</span><span class="t s" style="left:1770.0px;top:998.7px;font-size:11px;line-height:14px;color:#cccccc;letter-spacing:-1.18px;">CRLF</span><span class="t s" style="left:1808.6px;top:998.7px;font-size:11px;line-height:14px;color:#cccccc;letter-spacing:-0.21px;">Plain Text</span><svg class="b" style="left:1869.0px;top:999.0px;" width="12" height="12" viewBox="0 0 12 12"><path d="M6 1.200a3.300 3.300 0 0 0-3.300 3.300v2.800L1.500 9.200v.600h9v-.600L9.300 7.300V4.500A3.300 3.300 0 0 0 6 1.200zM4.800 10.500a1.200 1.200 0 0 0 2.400 0" fill="none" stroke="#cccccc" stroke-width="1"/><circle cx="9.300" cy="2.700" r="2" fill="#cccccc"/></svg>
<div class="b" style="left:26.5px;top:502.5px;width:1385.5px;height:511.0px;overflow:hidden;box-shadow:0 0 3px rgba(0,0,0,.6);"><div class="b" style="left:0.0px;top:0.0px;width:1385.5px;height:46.0px;background:#d5e3fc;"></div><div class="b" style="left:5.7px;top:5.2px;width:25.6px;height:24.8px;background:#eff4fe;border-radius:8px;"></div><svg class="b" style="left:13.5px;top:13.0px;" width="10" height="10" viewBox="0 0 10 10"><path d="M2 3.500l3 3 3-3" fill="none" stroke="#1f1f1f" stroke-width="1.600"/></svg><svg class="b" style="left:44.0px;top:11.0px;" width="14" height="14" viewBox="0 0 14 14"><circle cx="7" cy="7" r="6.400" fill="#5f6672"/><path d="M2.300 4.300C3.500 2.600 5.800 2 7.600 2.600C7.400 4 6.200 4.300 5.700 5.400C4.800 6.200 3.200 5.900 2.300 4.300Z M7.300 6.300C8.800 5.200 11.200 5.600 12.700 6.600C12.600 8.600 11.700 10.200 10.200 11.200C9.700 10 8.600 9.600 7.900 8.700C7.100 8 6.900 7.100 7.300 6.300Z M5 10.600c1-.700 2.400-.400 3.100.500-.300 1-1 1.600-1.900 1.800-.800-.500-1.200-1.300-1.200-2.300z" fill="#d5e3fc"/></svg><span class="t s" style="left:66.1px;top:10.7px;font-size:11.5px;line-height:15px;color:#1f1f1f;letter-spacing:-0.53px;">APK 逆向</span><svg class="b" style="left:202.9px;top:13.0px;" width="10" height="10" viewBox="0 0 10 10"><path d="M1.500 1.500l7 7M8.500 1.500l-7 7" stroke="#1f1f1f" stroke-width="1.400"/></svg><div class="b" style="left:225.0px;top:10.0px;width:1.5px;height:16.0px;background:#a8c0ec;"></div><svg class="b" style="left:236.1px;top:11.0px;" width="14" height="14" viewBox="0 0 14 14"><circle cx="7" cy="7" r="6.400" fill="#5f6672"/><path d="M2.300 4.300C3.500 2.600 5.800 2 7.600 2.600C7.400 4 6.200 4.300 5.700 5.400C4.800 6.200 3.200 5.900 2.300 4.300Z M7.300 6.300C8.800 5.200 11.200 5.600 12.700 6.600C12.600 8.600 11.700 10.200 10.200 11.200C9.700 10 8.600 9.600 7.900 8.700C7.100 8 6.900 7.100 7.300 6.300Z M5 10.600c1-.700 2.400-.400 3.100.500-.300 1-1 1.600-1.900 1.800-.800-.500-1.200-1.300-1.200-2.300z" fill="#d5e3fc"/></svg><span class="t s" style="left:257.5px;top:10.7px;font-size:11.5px;line-height:15px;color:#1f1f1f;letter-spacing:-0.05px;">Pcap Signature Extract</span><svg class="b" style="left:394.9px;top:13.0px;" width="10" height="10" viewBox="0 0 10 10"><path d="M1.500 1.500l7 7M8.500 1.500l-7 7" stroke="#1f1f1f" stroke-width="1.400"/></svg><div class="b" style="left:417.0px;top:10.0px;width:1.5px;height:16.0px;background:#a8c0ec;"></div><svg class="b" style="left:427.5px;top:11.0px;" width="14" height="14" viewBox="0 0 14 14"><circle cx="7" cy="7" r="6.400" fill="#5f6672"/><path d="M2.300 4.300C3.500 2.600 5.800 2 7.600 2.600C7.400 4 6.200 4.300 5.700 5.400C4.800 6.200 3.200 5.900 2.300 4.300Z M7.300 6.300C8.800 5.200 11.200 5.600 12.700 6.600C12.600 8.600 11.700 10.200 10.200 11.200C9.700 10 8.600 9.600 7.900 8.700C7.100 8 6.900 7.100 7.300 6.300Z M5 10.600c1-.700 2.400-.400 3.100.500-.300 1-1 1.600-1.900 1.800-.800-.500-1.200-1.300-1.200-2.300z" fill="#d5e3fc"/></svg><span class="t s" style="left:448.5px;top:10.7px;font-size:11.5px;line-height:15px;color:#1f1f1f;letter-spacing:0.07px;">Payload Comparison</span><svg class="b" style="left:586.5px;top:13.0px;" width="10" height="10" viewBox="0 0 10 10"><path d="M1.500 1.500l7 7M8.500 1.500l-7 7" stroke="#1f1f1f" stroke-width="1.400"/></svg><div class="b" style="left:609.0px;top:10.0px;width:1.5px;height:16.0px;background:#a8c0ec;"></div><svg class="b" style="left:619.5px;top:11.0px;" width="14" height="14" viewBox="0 0 14 14"><circle cx="7" cy="7" r="6.400" fill="#5f6672"/><path d="M2.300 4.300C3.500 2.600 5.800 2 7.600 2.600C7.400 4 6.200 4.300 5.700 5.400C4.800 6.200 3.200 5.900 2.300 4.300Z M7.300 6.300C8.800 5.200 11.200 5.600 12.700 6.600C12.600 8.600 11.700 10.200 10.200 11.200C9.700 10 8.600 9.600 7.900 8.700C7.100 8 6.900 7.100 7.300 6.300Z M5 10.600c1-.700 2.400-.400 3.100.500-.300 1-1 1.600-1.900 1.800-.800-.500-1.200-1.300-1.200-2.300z" fill="#d5e3fc"/></svg><span class="t s" style="left:640.5px;top:10.7px;font-size:11.5px;line-height:15px;color:#1f1f1f;letter-spacing:0.36px;">Directory listing for /</span><svg class="b" style="left:778.5px;top:13.0px;" width="10" height="10" viewBox="0 0 10 10"><path d="M1.500 1.500l7 7M8.500 1.500l-7 7" stroke="#1f1f1f" stroke-width="1.400"/></svg><div class="b" style="left:803.3px;top:4.5px;width:186.8px;height:32.0px;background:#ffffff;border-radius:9px 9px 0 0;"></div><div class="b" style="left:795.3px;top:27.7px;width:8.0px;height:8.0px;background:radial-gradient(circle at 0 0,#d5e3fc 7.500px,#fff 8px);"></div><div class="b" style="left:990.1px;top:27.7px;width:8.0px;height:8.0px;background:radial-gradient(circle at 100% 0,#d5e3fc 7.500px,#fff 8px);"></div><svg class="b" style="left:810.9px;top:11.0px;" width="14" height="14" viewBox="0 0 14 14"><circle cx="7" cy="7" r="4.600" fill="none" stroke="#2a6cc0" stroke-width="3.400"/></svg><div class="b" style="left:832.8px;top:8.5px;width:130.0px;height:20.0px;overflow:hidden;-webkit-mask-image:linear-gradient(to right,#000 80%,transparent 98%);mask-image:linear-gradient(to right,#000 80%,transparent 98%);"><span class="t s" style="left:0.0px;top:2.2px;font-size:11.5px;line-height:15px;color:#1f1f1f;letter-spacing:0.03px;">Tiangou Secure Gateway</span></div><svg class="b" style="left:970.0px;top:13.0px;" width="10" height="10" viewBox="0 0 10 10"><path d="M1.500 1.500l7 7M8.500 1.500l-7 7" stroke="#1f1f1f" stroke-width="1.400"/></svg><svg class="b" style="left:1002.5px;top:11.0px;" width="14" height="14" viewBox="0 0 14 14"><circle cx="7" cy="7" r="4.600" fill="none" stroke="#2a6cc0" stroke-width="3.400"/></svg><div class="b" style="left:1024.5px;top:8.5px;width:129.0px;height:20.0px;overflow:hidden;-webkit-mask-image:linear-gradient(to right,#000 80%,transparent 98%);mask-image:linear-gradient(to right,#000 80%,transparent 98%);"><span class="t s" style="left:0.0px;top:2.2px;font-size:11.5px;line-height:15px;color:#1f1f1f;letter-spacing:0.25px;">192.168.44.29/#/Objects</span></div><svg class="b" style="left:1160.5px;top:13.0px;" width="10" height="10" viewBox="0 0 10 10"><path d="M1.500 1.500l7 7M8.500 1.500l-7 7" stroke="#1f1f1f" stroke-width="1.400"/></svg><div class="b" style="left:1182.7px;top:10.0px;width:1.5px;height:16.0px;background:#a8c0ec;"></div><svg class="b" style="left:1192.8px;top:12.0px;" width="12" height="12" viewBox="0 0 12 12"><path d="M6 1v10M1 6h10" stroke="#1f1f1f" stroke-width="1.500"/></svg><div class="b" style="left:1276.0px;top:17.8px;width:10.5px;height:1.2px;background:#1f1f1f;"></div><div class="b" style="left:1318.0px;top:13.0px;width:10.0px;height:10.0px;border:1.200px solid #1f1f1f;box-sizing:border-box;"></div><svg class="b" style="left:1359.5px;top:12.5px;" width="11" height="11" viewBox="0 0 11 11"><path d="M.5.5l10 10M10.500.5l-10 10" stroke="#1f1f1f" stroke-width="1.200"/></svg><div class="b" style="left:0.0px;top:35.7px;width:1385.5px;height:41.3px;background:#ffffff;border-radius:7px 0 0 0;"></div><div class="b" style="left:0.0px;top:57.5px;width:1385.5px;height:100.0px;background:#ffffff;"></div><svg class="b" style="left:11.8px;top:48.5px;" width="17" height="17" viewBox="0 0 17 17"><path d="M14 8.500H3.500M8 3.500L3 8.500l5 5" fill="none" stroke="#474747" stroke-width="1.600"/></svg><svg class="b" style="left:44.6px;top:48.5px;transform:scaleX(-1);" width="17" height="17" viewBox="0 0 17 17"><path d="M14 8.500H3.500M8 3.500L3 8.500l5 5" fill="none" stroke="#b0b0b0" stroke-width="1.600"/></svg><svg class="b" style="left:77.5px;top:49.0px;" width="16" height="16" viewBox="0 0 16 16"><path d="M13 8a5 5 0 1 1-1.600-3.700" fill="none" stroke="#474747" stroke-width="1.600"/><path d="M13.300 1.800v3.700H9.600z" fill="#474747"/></svg><svg class="b" style="left:110.5px;top:49.0px;" width="16" height="16" viewBox="0 0 16 16"><path d="M2.500 7L8 2.300 13.500 7v6.700H9.800V9.500H6.200v4.200H2.500z" fill="none" stroke="#474747" stroke-width="1.600" stroke-linejoin="round"/></svg><div class="b" style="left:142.5px;top:41.5px;width:999.5px;height:31.5px;background:#edf2fa;border-radius:16px;"></div><div class="b" style="left:146.8px;top:45.2px;width:65.2px;height:24.3px;background:#ffffff;border-radius:12px;"></div><svg class="b" style="left:154.0px;top:51.8px;" width="11" height="11" viewBox="0 0 11 11"><circle cx="5.500" cy="5.500" r="5.500" fill="#c5221f"/><path d="M3.500 3.500l4 4M7.500 3.500l-4 4" stroke="#fff" stroke-width="1.300"/></svg><span class="t s" style="left:170.5px;top:50.5px;font-size:11px;line-height:14px;color:#b3261e;">不安全</span><span class="t s" style="left:219.9px;top:48.6px;font-size:13.5px;line-height:18px;color:#c5221f;letter-spacing:0.47px;text-decoration:line-through;">https</span><span class="t s" style="left:251.5px;top:48.6px;font-size:13.5px;line-height:18px;color:#1f1f1f;letter-spacing:0.13px;">://192.168.44.29/#/Log_SecurityEventLogs?rootMenu=virtual_system%2F1&amp;start=2024-10-15%2014%3A47%3A24&amp;end=2024-10-15%2...</span><svg class="b" style="left:1113.2px;top:48.8px;" width="16" height="16" viewBox="0 0 16 16"><path d="M8 1.800l1.900 4 4.300.500-3.200 3 .900 4.300L8 11.400l-3.900 2.200.900-4.300-3.200-3 4.300-.500z" fill="none" stroke="#474747" stroke-width="1.400" stroke-linejoin="round"/></svg><svg class="b" style="left:1157.5px;top:48.8px;" width="16" height="16" viewBox="0 0 16 16"><path d="M3 1.500h6.500L13 5v9.500H3z" fill="#1a73e8"/><path d="M5 6h5M5 8.500h5M5 11h3" stroke="#8ab4f8" stroke-width="1.200"/><circle cx="11.500" cy="12" r="3" fill="#fbbc04"/></svg><svg class="b" style="left:1191.0px;top:48.3px;" width="17" height="17" viewBox="0 0 17 17"><path d="M7 2.500a1.600 1.600 0 0 1 3.200 0V4h3v3.500h1.300a1.600 1.600 0 0 1 0 3.200H13.200V14.500H3V4h4z" fill="none" stroke="#474747" stroke-width="1.600" stroke-linejoin="round"/></svg><div class="b" style="left:1223.5px;top:49.5px;width:1.5px;height:15.0px;background:#c7d7f1;"></div><svg class="b" style="left:1240.5px;top:48.8px;" width="18" height="16" viewBox="0 0 18 16"><path d="M1.500 3c2.500-.800 5-.800 7.500.500v10c-2.500-1.300-5-1.300-7.500-.500zM16.500 3c-2.500-.800-5-.800-7.500.500v10c2.500-1.300 5-1.300 7.500-.500z" fill="none" stroke="#474747" stroke-width="1.500" stroke-linejoin="round"/><path d="M11 6.500h3.500M11 9h3.500" stroke="#474747" stroke-width="1"/></svg><div class="b" style="left:1274.5px;top:49.5px;width:1.5px;height:15.0px;background:#c7d7f1;"></div><svg class="b" style="left:1291.8px;top:48.8px;" width="16" height="16" viewBox="0 0 16 16"><path d="M8 2v8M4.500 6.800L8 10.300l3.500-3.500M2.500 11v2.500h11V11" fill="none" stroke="#474747" stroke-width="1.600"/></svg><div class="b" style="left:1324.5px;top:47.8px;width:18.0px;height:18.0px;background:#e8491d;border-radius:9px;"></div><span class="t s" style="left:1330.9px;top:49.7px;font-size:10.5px;line-height:14px;color:#ffffff;">y</span><svg class="b" style="left:16.2px;top:84.5px;" width="14" height="14" viewBox="0 0 14 14"><rect x="1" y="1" width="4.500" height="4.500" fill="none" stroke="#474747" stroke-width="1.400"/><rect x="8.500" y="1" width="4.500" height="4.500" fill="none" stroke="#474747" stroke-width="1.400"/><rect x="1" y="8.500" width="4.500" height="4.500" fill="none" stroke="#474747" stroke-width="1.400"/><rect x="8.500" y="8.500" width="4.500" height="4.500" fill="none" stroke="#474747" stroke-width="1.400"/></svg><div class="b" style="left:44.0px;top:83.5px;width:1.5px;height:16.0px;background:#c7d7f1;"></div><svg class="b" style="left:58.5px;top:86.0px;" width="14" height="11" viewBox="0 0 14 11"><path d="M1 1.500v8.500h2.500V5L7 7.600 10.500 5v5H13V1.500L7 6z" fill="#ea4335"/><path d="M1 1.500v8.500h2.500V3.400z" fill="#4285f4"/><path d="M13 1.500v8.500h-2.500V3.400z" fill="#34a853"/><path d="M1 1.500l2.500 1.900V5L1 3.100z" fill="#c5221f"/><path d="M13 1.500l-2.500 1.900V5L13 3.100z" fill="#fbbc04"/></svg><span class="t s" style="left:78.5px;top:84.2px;font-size:11.5px;line-height:15px;color:#3c3c3c;letter-spacing:-0.01px;">Gmail</span><svg class="b" style="left:126.1px;top:84.5px;" width="10" height="14" viewBox="0 0 10 14"><path d="M5 .5a4.500 4.500 0 0 0-4.500 4.500c0 3.200 4.500 8.500 4.500 8.500s4.500-5.300 4.500-8.500A4.500 4.500 0 0 0 5 .5z" fill="#ea4335"/><path d="M5 .5a4.500 4.500 0 0 0-3.400 1.600L5 5z" fill="#4285f4"/><path d="M.5 5c0 1.200.600 2.600 1.400 4L5 5 1.600 2.100A4.500 4.500 0 0 0 .5 5z" fill="#fbbc04"/><path d="M5 13.500s2.800-3.300 4-6.300L5 5 1.900 9c1.300 2.300 3.100 4.500 3.100 4.500z" fill="#34a853"/><circle cx="5" cy="5" r="1.700" fill="#fff"/></svg><span class="t s" style="left:144.0px;top:84.7px;font-size:11px;line-height:14px;color:#3c3c3c;letter-spacing:-0.25px;">地图</span><svg class="b" style="left:180.5px;top:84.5px;" width="14" height="14" viewBox="0 0 14 14"><rect x="0.500" y="0.500" width="8.500" height="9" rx="1" fill="#4285f4"/><rect x="5" y="4.500" width="8.500" height="9" rx="1" fill="#dadce0"/><path d="M2.800 7l1.900-5 1.900 5M3.400 5.500h2.600" fill="none" stroke="#fff" stroke-width=".9"/><path d="M7.500 8h4.500M9.700 7v1M8.300 11.500c1.500-.700 2.500-2 2.800-3.500M8.300 8.500c.500 1.300 1.600 2.300 3 3" fill="none" stroke="#5f6368" stroke-width=".8"/></svg><span class="t s" style="left:200.5px;top:84.7px;font-size:11px;line-height:14px;color:#3c3c3c;">翻译</span><svg class="b" style="left:238.0px;top:85.0px;" width="13" height="13" viewBox="0 0 13 13"><circle cx="6.500" cy="6.500" r="5.300" fill="none" stroke="#555" stroke-width="1.500"/><circle cx="6.500" cy="6.500" r="2.500" fill="none" stroke="#555" stroke-width="1.200"/><path d="M6.500 1.200v2.800M6.500 9v2.800M1.900 3.800l2.400 1.400M8.700 7.800l2.400 1.400M1.900 9.200l2.400-1.400M8.700 5.200l2.400-1.400" stroke="#555" stroke-width="1"/></svg><span class="t s" style="left:257.1px;top:84.2px;font-size:11.5px;line-height:15px;color:#3c3c3c;letter-spacing:-0.36px;">ChatGPT</span><svg class="b" style="left:318.0px;top:85.0px;" width="13" height="13" viewBox="0 0 13 13"><ellipse cx="6.500" cy="9" rx="3.800" ry="3.200" fill="#2932e1"/><ellipse cx="2" cy="5.800" rx="1.300" ry="1.800" fill="#2932e1"/><ellipse cx="11" cy="5.800" rx="1.300" ry="1.800" fill="#2932e1"/><ellipse cx="4.700" cy="2.600" rx="1.300" ry="1.900" fill="#2932e1"/><ellipse cx="8.300" cy="2.600" rx="1.300" ry="1.900" fill="#2932e1"/><path d="M5 9.500h3" stroke="#fff" stroke-width="1.200"/></svg><span class="t s" style="left:337.5px;top:84.7px;font-size:11px;line-height:14px;color:#3c3c3c;">百度</span><svg class="b" style="left:374.0px;top:84.0px;" width="15" height="15" viewBox="0 0 15 15"><path d="M7.500.700a7 7 0 0 0-2.200 13.600c.350.060.480-.150.480-.340v-1.200c-1.950.420-2.360-.940-2.360-.940-.320-.810-.780-1.020-.780-1.020-.640-.430.050-.420.050-.420.700.050 1.070.720 1.070.720.620 1.070 1.640.760 2.040.580.060-.450.240-.760.440-.930-1.550-.180-3.190-.780-3.190-3.460 0-.760.270-1.390.720-1.880-.070-.180-.310-.890.070-1.850 0 0 .590-.190 1.920.720a6.700 6.700 0 0 1 3.500 0c1.330-.910 1.920-.720 1.920-.720.380.960.140 1.670.070 1.850.450.490.720 1.120.720 1.880 0 2.690-1.640 3.280-3.200 3.450.250.220.480.640.480 1.300v1.920c0 .190.130.410.480.340A7 7 0 0 0 7.500.700z" fill="#1f2328"/></svg><span class="t s" style="left:394.5px;top:84.2px;font-size:11.5px;line-height:15px;color:#3c3c3c;letter-spacing:0.20px;">GitHub</span><svg class="b" style="left:445.5px;top:85.0px;" width="14" height="13" viewBox="0 0 14 13"><path d="M1 12L6 1h1.800l5 11h-2.300L9.500 9.500H4.400L3.300 12z M5.200 7.700h3.500L7 3.600z" fill="#34c759" fill-rule="evenodd"/><path d="M10 11.500l3 .5-1.500 1z" fill="#ffb000"/></svg><span class="t s" style="left:466.5px;top:84.2px;font-size:11.5px;line-height:15px;color:#3c3c3c;letter-spacing:-0.67px;">APK</span><svg class="b" style="left:502.5px;top:84.5px;" width="14" height="14" viewBox="0 0 14 14"><circle cx="7" cy="7" r="6.500" fill="#4aa3df"/><path d="M2.500 3.500c1.500.500 3 .200 3.500 1.500s-1.500 2-1 3.200 2.200.800 2.500 2.300-.800 2-.500 3" fill="none" stroke="#7bd26a" stroke-width="2"/><path d="M9 1.500c-.300 1.200 1 1.500 1.800 2.200s.300 2 1.200 2.300 1.500 0 1.500 0" fill="none" stroke="#7bd26a" stroke-width="1.800"/></svg><span class="t s" style="left:522.5px;top:84.2px;font-size:11.5px;line-height:15px;color:#3c3c3c;letter-spacing:0.06px;">IP Address</span><svg class="b" style="left:598.0px;top:84.5px;" width="15" height="14" viewBox="0 0 15 14"><path d="M1.200 2.200h4.300l1.400 1.500h6.900v8.100H1.200z" fill="none" stroke="#474747" stroke-width="1.400" stroke-linejoin="round"/></svg><span class="t s" style="left:620.5px;top:84.2px;font-size:11.5px;line-height:15px;color:#3c3c3c;letter-spacing:0.13px;">K24-Demo</span><svg class="b" style="left:694.0px;top:84.5px;" width="15" height="14" viewBox="0 0 15 14"><path d="M1.200 2.200h4.300l1.400 1.500h6.900v8.100H1.200z" fill="none" stroke="#474747" stroke-width="1.400" stroke-linejoin="round"/></svg><span class="t s" style="left:715.8px;top:84.2px;font-size:11.5px;line-height:15px;color:#3c3c3c;letter-spacing:-0.25px;">E-21</span><svg class="b" style="left:756.0px;top:84.5px;" width="15" height="14" viewBox="0 0 15 14"><path d="M1.200 2.200h4.300l1.400 1.500h6.900v8.100H1.200z" fill="none" stroke="#474747" stroke-width="1.400" stroke-linejoin="round"/></svg><span class="t s" style="left:778.1px;top:84.2px;font-size:11.5px;line-height:15px;color:#3c3c3c;letter-spacing:-0.02px;">Doc</span><svg class="b" style="left:815.0px;top:84.5px;" width="15" height="14" viewBox="0 0 15 14"><path d="M1.200 2.200h4.300l1.400 1.500h6.900v8.100H1.200z" fill="none" stroke="#474747" stroke-width="1.400" stroke-linejoin="round"/></svg><span class="t s" style="left:837.2px;top:84.2px;font-size:11.5px;line-height:15px;color:#3c3c3c;letter-spacing:-0.66px;">XXG</span><svg class="b" style="left:876.0px;top:85.0px;" width="13" height="13" viewBox="0 0 14 14"><circle cx="7" cy="7" r="6.400" fill="#5f6672"/><path d="M2.300 4.300C3.500 2.600 5.800 2 7.600 2.600C7.400 4 6.200 4.300 5.700 5.400C4.800 6.200 3.200 5.900 2.300 4.300Z M7.300 6.300C8.800 5.200 11.200 5.600 12.700 6.600C12.600 8.600 11.700 10.200 10.200 11.200C9.700 10 8.600 9.600 7.900 8.700C7.100 8 6.900 7.100 7.300 6.300Z M5 10.600c1-.700 2.400-.400 3.100.500-.300 1-1 1.600-1.900 1.800-.800-.500-1.200-1.300-1.200-2.300z" fill="#ffffff"/></svg><span class="t s" style="left:895.1px;top:84.2px;font-size:11.5px;line-height:15px;color:#3c3c3c;letter-spacing:-0.06px;">Payload Comparis...</span><svg class="b" style="left:1016.0px;top:85.0px;" width="13" height="13" viewBox="0 0 14 14"><circle cx="7" cy="7" r="6.400" fill="#5f6672"/><path d="M2.300 4.300C3.500 2.600 5.800 2 7.600 2.600C7.400 4 6.200 4.300 5.700 5.400C4.800 6.200 3.200 5.900 2.300 4.300Z M7.300 6.300C8.800 5.200 11.200 5.600 12.700 6.600C12.600 8.600 11.700 10.200 10.200 11.200C9.700 10 8.600 9.600 7.900 8.700C7.100 8 6.900 7.100 7.300 6.300Z M5 10.600c1-.700 2.400-.400 3.100.500-.300 1-1 1.600-1.900 1.800-.800-.500-1.200-1.300-1.200-2.300z" fill="#ffffff"/></svg><span class="t s" style="left:1035.5px;top:84.2px;font-size:11.5px;line-height:15px;color:#3c3c3c;letter-spacing:-0.16px;">Pcap Signature Ex...</span><div class="b" style="left:1291.5px;top:83.5px;width:1.5px;height:16.0px;background:#c7d7f1;"></div><svg class="b" style="left:1307.6px;top:84.5px;" width="15" height="14" viewBox="0 0 15 14"><path d="M1.200 2.200h4.300l1.400 1.500h6.900v8.100H1.200z" fill="none" stroke="#474747" stroke-width="1.400" stroke-linejoin="round"/></svg><span class="t s" style="left:1329.5px;top:84.7px;font-size:11px;line-height:14px;color:#3c3c3c;">所有书签</span><svg class="b" style="left:15.5px;top:125.1px;" width="16" height="16" viewBox="0 0 16 16"><circle cx="8" cy="8" r="7.500" fill="#fff"/><path d="M8 .5a7.500 7.500 0 0 1 6.500 3.750H8A3.750 3.750 0 0 0 4.750 6.100L1.800 3.900A7.500 7.500 0 0 1 8 .5z" fill="#ea4335"/><path d="M14.500 4.250A7.500 7.500 0 0 1 7.600 15.500l3.600-5.600A3.750 3.750 0 0 0 11.750 8c0-1.500-.700-2.800-1.600-3.750z" fill="#fbbc04"/><path d="M1.800 3.900l3.200 5.700A3.750 3.750 0 0 0 9.300 11.500l-1.700 4A7.500 7.500 0 0 1 1.800 3.900z" fill="#34a853"/><circle cx="8" cy="8" r="3.400" fill="#fff"/><circle cx="8" cy="8" r="2.700" fill="#4285f4"/></svg><span class="t s" style="left:47.5px;top:125.3px;font-size:12px;line-height:16px;color:#3c3c3c;letter-spacing:0.17px;">Google Chrome 不是您的默认浏览器</span><div class="b" style="left:263.0px;top:116.5px;width:76.2px;height:33.0px;background:#0b57d0;border-radius:16.500px;"></div><span class="t s" style="left:277.6px;top:125.8px;font-size:11.5px;line-height:15px;color:#ffffff;letter-spacing:0.25px;">设为默认</span><svg class="b" style="left:1356.5px;top:128.0px;" width="10" height="10" viewBox="0 0 10 10"><path d="M1 1l8 8M9 1L1 9" stroke="#474747" stroke-width="1.300"/></svg><div class="b" style="left:0.0px;top:156.5px;width:1385.5px;height:1.0px;background:#dfe3ea;"></div><div class="b" style="left:0.0px;top:157.5px;width:1385.5px;height:31.0px;background:#2e739e;"></div><svg class="b" style="left:15.8px;top:161.5px;" width="20" height="20" viewBox="0 0 20 20"><circle cx="10" cy="10" r="6.300" fill="none" stroke="#fff" stroke-width="5"/></svg><span class="t s" style="left:42.5px;top:158.4px;font-size:21px;line-height:27px;color:#ffffff;font-weight:bold;transform:scaleX(.74);transform-origin:0 50%;-webkit-text-stroke:.6px #fff;">TSG</span><svg class="b" style="left:109.0px;top:167.5px;" width="11" height="9" viewBox="0 0 11 9"><path d="M0 1.200h11M0 4.500h11M0 7.800h11" stroke="#fff" stroke-width="1.700"/></svg><span class="t s" style="left:126.9px;top:163.8px;font-size:12.5px;line-height:16px;color:#ffffff;letter-spacing:0.18px;">Menu</span><span class="t s" style="left:1166.5px;top:166.5px;font-size:10.5px;line-height:14px;color:#ffffff;letter-spacing:0.24px;">Version 24.09</span><div class="b" style="left:1243.6px;top:168.0px;width:1.0px;height:10.0px;background:#d6e4ee;"></div><div class="b" style="left:1280.0px;top:168.0px;width:1.0px;height:10.0px;background:#d6e4ee;"></div><div class="b" style="left:1318.0px;top:168.0px;width:1.0px;height:10.0px;background:#d6e4ee;"></div><svg class="b" style="left:1255.3px;top:166.0px;" width="14" height="14" viewBox="0 0 14 14"><circle cx="7" cy="7" r="5.800" fill="none" stroke="#fff" stroke-width="1.600"/><path d="M7 2.500a4.500 4.500 0 0 1 0 9z" fill="#fff"/></svg><svg class="b" style="left:1291.6px;top:166.0px;" width="15" height="13" viewBox="0 0 15 13"><rect x=".5" y=".5" width="14" height="12" rx="2" fill="#fff"/><path d="M3.500 4h3M3.500 6.500h2.500M3.500 9h3M3.500 4v5M8.500 9V4l3 5V4" fill="none" stroke="#2e739e" stroke-width="1.100"/></svg><span class="t s" style="left:1332.5px;top:165.2px;font-size:12.5px;line-height:16px;color:#ffffff;font-weight:500;">何勇</span><div class="b" style="left:0.0px;top:188.5px;width:1385.5px;height:322.5px;background:#f3f3f3;"></div><div class="b" style="left:0.0px;top:188.5px;width:229.7px;height:322.5px;background:#ffffff;"></div><div class="b" style="left:222.0px;top:198.0px;width:8.0px;height:181.0px;background:#c1c1c1;border-radius:4px;"></div><div class="b" style="left:16.7px;top:197.5px;width:23.0px;height:22.5px;background:#f5f5f5;border:1px solid #e6e6e6;border-radius:3px;box-sizing:border-box;"></div><svg class="b" style="left:20.2px;top:201.3px;" width="16" height="15" viewBox="0 0 16 15"><path d="M8 1.200L1.500 4.300 8 7.400l6.500-3.100zM1.500 7.500L8 10.600l6.500-3.100M1.500 10.700L8 13.800l6.500-3.100" fill="none" stroke="#2e739e" stroke-width="1.200" stroke-linejoin="round"/></svg><span class="t s" style="left:43.8px;top:199.8px;font-size:12.5px;line-height:16px;color:#1e1e1e;letter-spacing:0.10px;">Default Vsys</span><span class="t s" style="left:40.2px;top:233.4px;font-size:12.5px;line-height:16px;color:#1e1e1e;letter-spacing:0.14px;">Dashboards</span><span class="t s" style="left:40.2px;top:262.6px;font-size:12.5px;line-height:16px;color:#1e1e1e;letter-spacing:0.10px;">Live Charts</span><span class="t s" style="left:40.2px;top:291.6px;font-size:12.5px;line-height:16px;color:#1e1e1e;letter-spacing:0.09px;">Policies</span><span class="t s" style="left:40.2px;top:320.9px;font-size:12.5px;line-height:16px;color:#1e1e1e;letter-spacing:0.06px;">Objects</span><span class="t s" style="left:40.2px;top:350.0px;font-size:12.5px;line-height:16px;color:#1e1e1e;letter-spacing:0.06px;">Library</span><span class="t s" style="left:40.2px;top:379.1px;font-size:12.5px;line-height:16px;color:#1e1e1e;letter-spacing:0.08px;">Profiles</span><svg class="b" style="left:20.0px;top:234.5px;" width="14" height="14" viewBox="0 0 14 14"><path d="M2.300 11.500A5.800 5.800 0 0 1 9.500 2" fill="none" stroke="#8190a2" stroke-width="1.500"/><path d="M6.500 8.500l3.500-4" stroke="#8190a2" stroke-width="1.500"/><circle cx="6.300" cy="8.700" r="1.400" fill="#8190a2"/><circle cx="12" cy="6" r=".8" fill="#8190a2"/><circle cx="12" cy="10.500" r=".8" fill="#8190a2"/></svg><svg class="b" style="left:20.5px;top:264.0px;" width="14" height="14" viewBox="0 0 14 14"><path d="M1.500 1.500v11.500h11.500" fill="none" stroke="#8190a2" stroke-width="1"/><path d="M3.500 11v-3M6 11V7M8.500 11V8.500M11 11V6" stroke="#8190a2" stroke-width="1.300"/><path d="M3 6l3-2.500 2.500 2L12 2" fill="none" stroke="#8190a2" stroke-width="1"/></svg><svg class="b" style="left:19.5px;top:292.0px;" width="15" height="15" viewBox="0 0 15 15"><circle cx="7.500" cy="7.500" r="2.600" fill="#8190a2"/><path d="M7.500 0l2.200 2.500H5.300zM7.500 15l2.200-2.500H5.300zM0 7.500l2.500-2.200v4.400zM15 7.500l-2.500-2.200v4.400z" fill="#8190a2"/></svg><svg class="b" style="left:20.5px;top:322.0px;" width="14" height="14" viewBox="0 0 14 14"><path d="M7 .8l5.700 3v6.400L7 13.200 1.300 10.200V3.800z" fill="#8190a2"/><path d="M1.300 3.800L7 6.800l5.700-3M7 6.800v6.400" fill="none" stroke="#fff" stroke-width=".9"/></svg><svg class="b" style="left:20.0px;top:351.5px;" width="15" height="13" viewBox="0 0 15 13"><path d="M1 2h4.500c1 0 2 .600 2 1.600V12c0-.800-1-1.300-2-1.300H1zM14 2H9.500c-1 0-2 .600-2 1.600V12c0-.800 1-1.300 2-1.300H14z" fill="none" stroke="#8190a2" stroke-width="1.200"/></svg><svg class="b" style="left:21.0px;top:380.0px;" width="13" height="15" viewBox="0 0 13 15"><path d="M1 .8h7.500l3.500 3.500V9M1 .8V14h5" fill="none" stroke="#8190a2" stroke-width="1.200"/><path d="M3 4.500h4M3 7h3" stroke="#8190a2" stroke-width="1.100"/><circle cx="9.300" cy="11.300" r="2.800" fill="none" stroke="#8190a2" stroke-width="1.300"/><circle cx="9.300" cy="11.300" r=".9" fill="#8190a2"/></svg><div class="b" style="left:0.0px;top:401.5px;width:4.5px;height:81.0px;background:#2e739e;"></div><div class="b" style="left:4.5px;top:401.5px;width:216.8px;height:29.8px;background:#f7f7f7;"></div><div class="b" style="left:4.5px;top:431.3px;width:216.8px;height:23.8px;background:#e6e6e6;"></div><svg class="b" style="left:21.0px;top:409.0px;" width="13" height="15" viewBox="0 0 13 15"><path d="M1 .8h7.500l3.500 3.500V14H1z" fill="none" stroke="#2e739e" stroke-width="1.300"/><path d="M3 9.500h7" stroke="#2e739e" stroke-width="2.500"/></svg><span class="t s" style="left:40.5px;top:408.1px;font-size:13.5px;line-height:18px;color:#2e739e;letter-spacing:-0.81px;font-weight:bold;">Logs</span><span class="t s" style="left:40.5px;top:436.5px;font-size:12.5px;line-height:16px;color:#2e739e;letter-spacing:0.21px;font-weight:bold;">Security Events</span><span class="t s" style="left:67.5px;top:462.2px;font-size:12.5px;line-height:16px;color:#1e1e1e;letter-spacing:0.12px;">Collapse sidebar</span><svg class="b" style="left:209.8px;top:465.8px;" width="14" height="14" viewBox="0 0 12 12"><path d="M6 1.500L1.500 6 6 10.500M11 1.500L6.500 6 11 10.500" fill="none" stroke="#555" stroke-width="1.100"/></svg><div class="b" style="left:246.7px;top:207.1px;width:1121.2px;height:286.0px;background:#ffffff;box-shadow:0 0 6px rgba(0,0,0,.18);"></div><div class="b" style="left:265.5px;top:216.0px;width:93.4px;height:21.0px;background:#f5f5f5;border:1px solid #e2e2e2;border-radius:2px;box-sizing:border-box;"></div><svg class="b" style="left:269.7px;top:218.8px;" width="15" height="15" viewBox="0 0 15 15"><circle cx="7.500" cy="7.500" r="6.500" fill="none" stroke="#333" stroke-width="1.100"/><path d="M7.500 3.500v4.300h3.300" fill="none" stroke="#333" stroke-width="1.100"/></svg><span class="t s" style="left:289.5px;top:218.5px;font-size:12.5px;line-height:16px;color:#222;letter-spacing:0.22px;">Last 1 hour</span><div class="b" style="left:358.9px;top:216.0px;width:897.3px;height:21.0px;border:1px solid #e8e8e8;border-left:none;box-sizing:border-box;"></div><div class="b" style="left:360.0px;top:217.0px;width:19.0px;height:19.0px;background:#f4f6f8;"></div><svg class="b" style="left:364.5px;top:222.0px;" width="9" height="9" viewBox="0 0 9 9"><path d="M1 1l7 7M8 1L1 8" stroke="#888" stroke-width="1"/></svg><span class="t s" style="left:379.5px;top:218.7px;font-size:12px;line-height:16px;color:#c8602a;letter-spacing:0.11px;">HAS</span><span class="t s" style="left:409.5px;top:218.7px;font-size:12px;line-height:16px;color:#333;letter-spacing:0.32px;">( Security Rule List , 7179 )</span><div class="b" style="left:563.5px;top:217.0px;width:10.0px;height:19.0px;background:#f4f6f8;"></div><div class="b" style="left:583.5px;top:216.5px;width:65.0px;height:20.5px;background:#f6f6f6;border:1px solid #d0d0d0;border-radius:3px;box-sizing:border-box;"></div><span class="t s" style="left:588.5px;top:218.4px;font-size:12px;line-height:16px;color:#222;letter-spacing:0.36px;">Add Filter</span><div class="b" style="left:1215.3px;top:218.2px;width:17.0px;height:16.3px;background:#111;border-radius:3px;"></div><svg class="b" style="left:1218.3px;top:220.8px;" width="11" height="11" viewBox="0 0 11 11"><path d="M1 1.500h9L6.500 5.800v4L4.500 8.500V5.800z" fill="#fff"/></svg><svg class="b" style="left:1238.8px;top:221.3px;" width="10" height="10" viewBox="0 0 10 10"><path d="M1 1l8 8M9 1L1 9" stroke="#222" stroke-width="1.100"/></svg><div class="b" style="left:1256.2px;top:214.9px;width:27.3px;height:22.1px;background:#2e739e;border-radius:0 2px 2px 0;"></div><svg class="b" style="left:1263.3px;top:219.5px;" width="13" height="13" viewBox="0 0 13 13"><circle cx="6" cy="6" r="4.300" fill="none" stroke="#fff" stroke-width="1.400"/><path d="M9.200 9.200l2.300 2.300" stroke="#fff" stroke-width="1.400"/></svg><svg class="b" style="left:1292.3px;top:217.5px;" width="17" height="17" viewBox="0 0 17 17"><circle cx="8.500" cy="8.500" r="7.300" fill="none" stroke="#333" stroke-width="1"/></svg><span class="t s" style="left:1297.7px;top:219.5px;font-size:11px;line-height:14px;color:#333;">?</span><div class="b" style="left:1318.0px;top:214.7px;width:23.3px;height:22.3px;background:#2e739e;border-radius:2px;"></div><svg class="b" style="left:1323.2px;top:219.0px;" width="13" height="13" viewBox="0 0 13 13"><path d="M5.500 2H1.800v9.200H11V7.500" fill="none" stroke="#fff" stroke-width="1.300"/><path d="M5.500 8c.300-2.500 1.800-4 4.500-4.200" fill="none" stroke="#fff" stroke-width="1.300"/><path d="M8.500 1l3.500 2.800-3.500 2.800z" fill="#fff"/></svg><span class="t s" style="left:265.5px;top:253.4px;font-size:12.5px;line-height:16px;color:#222;letter-spacing:0.18px;">Total: 237</span><span class="t s" style="left:340.5px;top:253.4px;font-size:12.5px;line-height:16px;color:#222;letter-spacing:0.12px;">(2024-10-15 14:47:24 to 2024-10-15 15:47:24)</span><span class="t s" style="left:283.5px;top:278.8px;font-size:13.5px;line-height:18px;color:#2e739e;letter-spacing:-0.30px;">Event</span><span class="t s" style="left:353.5px;top:278.8px;font-size:13.5px;line-height:18px;color:#222;letter-spacing:0.11px;">Visualization</span><div class="b" style="left:265.5px;top:302.5px;width:1075.5px;height:1.0px;background:#dcdcdc;"></div><div class="b" style="left:265.5px;top:301.5px;width:68.5px;height:2.0px;background:#2e739e;"></div><span class="t s" style="left:308.5px;top:307.7px;font-size:11px;line-height:14px;color:#a0a0a0;letter-spacing:-0.08px;">Sessions</span><span class="t s" style="left:311.8px;top:326.7px;font-size:11px;line-height:14px;color:#333;">15</span><span class="t s" style="left:317.9px;top:378.2px;font-size:11px;line-height:14px;color:#333;">0</span><div class="b" style="left:419.2px;top:313.0px;width:1.0px;height:23.0px;background:#f8f8f8;"></div><div class="b" style="left:466.0px;top:313.0px;width:1.0px;height:23.0px;background:#f8f8f8;"></div><div class="b" style="left:512.7px;top:313.0px;width:1.0px;height:23.0px;background:#f8f8f8;"></div><div class="b" style="left:559.5px;top:313.0px;width:1.0px;height:23.0px;background:#f8f8f8;"></div><div class="b" style="left:606.2px;top:313.0px;width:1.0px;height:23.0px;background:#f8f8f8;"></div><div class="b" style="left:653.0px;top:313.0px;width:1.0px;height:23.0px;background:#f8f8f8;"></div><div class="b" style="left:699.8px;top:313.0px;width:1.0px;height:23.0px;background:#f8f8f8;"></div><div class="b" style="left:746.5px;top:313.0px;width:1.0px;height:23.0px;background:#f8f8f8;"></div><div class="b" style="left:793.3px;top:313.0px;width:1.0px;height:23.0px;background:#f8f8f8;"></div><div class="b" style="left:840.0px;top:313.0px;width:1.0px;height:23.0px;background:#f8f8f8;"></div><div class="b" style="left:886.8px;top:313.0px;width:1.0px;height:23.0px;background:#f8f8f8;"></div><div class="b" style="left:933.6px;top:313.0px;width:1.0px;height:23.0px;background:#f8f8f8;"></div><div class="b" style="left:980.3px;top:313.0px;width:1.0px;height:23.0px;background:#f8f8f8;"></div><div class="b" style="left:1027.1px;top:313.0px;width:1.0px;height:23.0px;background:#f8f8f8;"></div><div class="b" style="left:1073.8px;top:313.0px;width:1.0px;height:23.0px;background:#f8f8f8;"></div><div class="b" style="left:1120.6px;top:313.0px;width:1.0px;height:23.0px;background:#f8f8f8;"></div><div class="b" style="left:1167.4px;top:313.0px;width:1.0px;height:23.0px;background:#f8f8f8;"></div><div class="b" style="left:1214.1px;top:313.0px;width:1.0px;height:23.0px;background:#f8f8f8;"></div><div class="b" style="left:1260.9px;top:313.0px;width:1.0px;height:23.0px;background:#f8f8f8;"></div><div class="b" style="left:1307.6px;top:313.0px;width:1.0px;height:23.0px;background:#f8f8f8;"></div><div class="b" style="left:330.5px;top:335.5px;width:1.0px;height:51.0px;background:#555;"></div><div class="b" style="left:330.5px;top:385.5px;width:966.0px;height:1.7px;background:#4a4a4a;"></div><svg class="b" style="left:0;top:0" width="1385.5" height="511" fill="#2e739e"><rect x="355.6" y="382.3" width="6.300" height="3.4"/><rect x="387.6" y="378.8" width="6.300" height="6.9"/><rect x="435.4" y="378.8" width="6.300" height="6.9"/><rect x="451.4" y="378.8" width="6.300" height="6.9"/><rect x="475.3" y="375.4" width="6.300" height="10.3"/><rect x="491.3" y="378.8" width="6.300" height="6.9"/><rect x="499.3" y="382.3" width="6.300" height="3.4"/><rect x="507.3" y="365.1" width="6.300" height="20.6"/><rect x="515.2" y="378.8" width="6.300" height="6.9"/><rect x="531.2" y="382.3" width="6.300" height="3.4"/><rect x="539.2" y="365.1" width="6.300" height="20.6"/><rect x="547.2" y="378.8" width="6.300" height="6.9"/><rect x="555.1" y="378.8" width="6.300" height="6.9"/><rect x="587.1" y="378.8" width="6.300" height="6.9"/><rect x="603.0" y="378.8" width="6.300" height="6.9"/><rect x="611.0" y="358.3" width="6.300" height="27.4"/><rect x="619.0" y="358.3" width="6.300" height="27.4"/><rect x="634.9" y="382.3" width="6.300" height="3.4"/><rect x="642.9" y="341.1" width="6.300" height="44.6"/><rect x="650.9" y="375.4" width="6.300" height="10.3"/><rect x="658.9" y="382.3" width="6.300" height="3.4"/><rect x="674.8" y="351.4" width="6.300" height="34.3"/><rect x="682.8" y="378.8" width="6.300" height="6.9"/><rect x="706.8" y="382.3" width="6.300" height="3.4"/><rect x="714.7" y="368.6" width="6.300" height="17.2"/><rect x="738.7" y="378.8" width="6.300" height="6.9"/><rect x="746.7" y="351.4" width="6.300" height="34.3"/><rect x="754.6" y="378.8" width="6.300" height="6.9"/><rect x="786.6" y="382.3" width="6.300" height="3.4"/><rect x="794.5" y="375.4" width="6.300" height="10.3"/><rect x="810.5" y="378.8" width="6.300" height="6.9"/><rect x="834.4" y="378.8" width="6.300" height="6.9"/><rect x="850.4" y="382.3" width="6.300" height="3.4"/><rect x="858.4" y="382.3" width="6.300" height="3.4"/><rect x="866.4" y="378.8" width="6.300" height="6.9"/><rect x="882.3" y="361.7" width="6.300" height="24.0"/><rect x="890.3" y="365.1" width="6.300" height="20.6"/><rect x="898.3" y="378.8" width="6.300" height="6.9"/><rect x="914.2" y="365.1" width="6.300" height="20.6"/><rect x="922.2" y="358.3" width="6.300" height="27.4"/><rect x="930.2" y="378.8" width="6.300" height="6.9"/><rect x="946.2" y="372.0" width="6.300" height="13.7"/><rect x="954.1" y="378.8" width="6.300" height="6.9"/><rect x="962.1" y="378.8" width="6.300" height="6.9"/><rect x="994.0" y="382.3" width="6.300" height="3.4"/><rect x="1002.0" y="382.3" width="6.300" height="3.4"/><rect x="1026.0" y="378.8" width="6.300" height="6.9"/><rect x="1057.9" y="378.8" width="6.300" height="6.9"/><rect x="1065.9" y="378.8" width="6.300" height="6.9"/><rect x="1089.8" y="375.4" width="6.300" height="10.3"/><rect x="1105.8" y="378.8" width="6.300" height="6.9"/><rect x="1113.7" y="382.3" width="6.300" height="3.4"/><rect x="1121.7" y="378.8" width="6.300" height="6.9"/><rect x="1129.7" y="375.4" width="6.300" height="10.3"/><rect x="1137.7" y="378.8" width="6.300" height="6.9"/><rect x="1161.6" y="354.8" width="6.300" height="30.9"/><rect x="1169.6" y="375.4" width="6.300" height="10.3"/><rect x="1177.6" y="375.4" width="6.300" height="10.3"/><rect x="1185.6" y="382.3" width="6.300" height="3.4"/><rect x="1193.5" y="344.5" width="6.300" height="41.2"/><rect x="1201.5" y="382.3" width="6.300" height="3.4"/><rect x="1209.5" y="372.0" width="6.300" height="13.7"/><rect x="1217.5" y="375.4" width="6.300" height="10.3"/><rect x="1225.5" y="378.8" width="6.300" height="6.9"/><rect x="1233.4" y="368.6" width="6.300" height="17.2"/><rect x="1241.4" y="372.0" width="6.300" height="13.7"/><rect x="1257.4" y="375.4" width="6.300" height="10.3"/><rect x="1265.4" y="361.7" width="6.300" height="24.0"/><rect x="1273.3" y="372.0" width="6.300" height="13.7"/><rect x="1281.3" y="378.8" width="6.300" height="6.9"/></svg><span class="t s" style="left:281.0px;top:390.7px;font-size:11px;line-height:14px;color:#333;letter-spacing:0.28px;">2024-10-15 14:47:00</span><span class="t s" style="left:424.5px;top:390.7px;font-size:11px;line-height:14px;color:#333;letter-spacing:0.28px;">2024-10-15 14:56:00</span><span class="t s" style="left:568.0px;top:390.7px;font-size:11px;line-height:14px;color:#333;letter-spacing:0.28px;">2024-10-15 15:05:00</span><span class="t s" style="left:711.6px;top:390.7px;font-size:11px;line-height:14px;color:#333;letter-spacing:0.28px;">2024-10-15 15:14:00</span><span class="t s" style="left:855.1px;top:390.7px;font-size:11px;line-height:14px;color:#333;letter-spacing:0.28px;">2024-10-15 15:23:00</span><span class="t s" style="left:998.6px;top:390.7px;font-size:11px;line-height:14px;color:#333;letter-spacing:0.28px;">2024-10-15 15:32:00</span><span class="t s" style="left:1142.1px;top:390.7px;font-size:11px;line-height:14px;color:#333;letter-spacing:0.28px;">2024-10-15 15:41:00</span><svg class="b" style="left:1287.4px;top:312.4px;" width="13" height="13" viewBox="0 0 13 13"><circle cx="6.500" cy="6.500" r="6.500" fill="#2e739e"/></svg><span class="t s" style="left:1310.2px;top:311.7px;font-size:11px;line-height:14px;color:#333;letter-spacing:0.21px;">Deny</span><div class="b" style="left:265.5px;top:413.5px;width:1075.5px;height:1.0px;background:#dcdcdc;"></div><div class="b" style="left:265.5px;top:424.1px;width:100.4px;height:23.4px;background:#fff;border:1px solid #dcdcdc;border-radius:2px;box-sizing:border-box;"></div><svg class="b" style="left:272.0px;top:430.8px;" width="9" height="10" viewBox="0 0 9 10"><path d="M2.500 1L7 5 2.500 9" fill="none" stroke="#555" stroke-width="1"/></svg><span class="t s" style="left:291.0px;top:428.0px;font-size:12.5px;line-height:16px;color:#222;letter-spacing:0.13px;">Show Fields</span><div class="b" style="left:480.0px;top:425.2px;width:178.0px;height:22.0px;background:#fff;border:1px solid #d0d0d0;border-radius:2px;box-sizing:border-box;"></div><div class="b" style="left:481.5px;top:426.7px;width:87.0px;height:19.0px;background:#2e739e;"></div><span class="t s" style="left:497.2px;top:428.2px;font-size:12.5px;line-height:16px;color:#fff;letter-spacing:0.23px;">Text View</span><span class="t s" style="left:581.2px;top:428.2px;font-size:12.5px;line-height:16px;color:#222;letter-spacing:0.26px;">Table View</span><span class="t s" style="left:676.5px;top:428.2px;font-size:12.5px;line-height:16px;color:#2e739e;letter-spacing:0.13px;">20 lines/page</span><svg class="b" style="left:761.0px;top:432.3px;" width="11" height="8" viewBox="0 0 11 8"><path d="M1 1.500l4.500 4.500L10 1.500" fill="none" stroke="#2e739e" stroke-width="1.100"/></svg><svg class="b" style="left:817.5px;top:430.3px;" width="8" height="11" viewBox="0 0 8 11"><path d="M6 1L1.500 5.500 6 10" fill="none" stroke="#555" stroke-width="1"/></svg><div class="b" style="left:872.5px;top:423.1px;width:27.0px;height:25.0px;background:#2e739e;border-radius:2px;"></div><span class="t s" style="left:882.5px;top:428.2px;font-size:12.5px;line-height:16px;color:#fff;">1</span><span class="t s" style="left:919.0px;top:428.2px;font-size:12.5px;line-height:16px;color:#333;">2</span><span class="t s" style="left:955.7px;top:428.2px;font-size:12.5px;line-height:16px;color:#333;">3</span><span class="t s" style="left:992.0px;top:428.2px;font-size:12.5px;line-height:16px;color:#333;">4</span><span class="t s" style="left:1028.6px;top:428.2px;font-size:12.5px;line-height:16px;color:#333;">5</span><span class="t s" style="left:1065.0px;top:428.2px;font-size:12.5px;line-height:16px;color:#333;">6</span><span class="t s" style="left:1101.7px;top:428.2px;font-size:12.5px;line-height:16px;color:#333;">7</span><span class="t s" style="left:1138.0px;top:428.2px;font-size:12.5px;line-height:16px;color:#333;">8</span><span class="t s" style="left:1174.7px;top:428.2px;font-size:12.5px;line-height:16px;color:#333;">9</span><span class="t s" style="left:1207.5px;top:428.2px;font-size:12.5px;line-height:16px;color:#333;">10</span><svg class="b" style="left:1275.1px;top:430.3px;" width="8" height="11" viewBox="0 0 8 11"><path d="M2 1l4.500 4.500L2 10" fill="none" stroke="#555" stroke-width="1"/></svg><svg class="b" style="left:1324.5px;top:428.0px;" width="16" height="16" viewBox="0 0 16 16"><path d="M9.500 1.500l5 5-1.800.600-2.200 2.200.300 3-1.300 1.300L6 10 2 14 6 10 2.400 6.500l1.300-1.300 3 .300 2.200-2.200z" fill="none" stroke="#2e739e" stroke-width="1.200" stroke-linejoin="round"/></svg><div class="b" style="left:265.5px;top:458.0px;width:1075.5px;height:1.0px;background:#e2e2e2;"></div><div class="b" style="left:265.5px;top:459.0px;width:1075.5px;height:34.0px;background:#fafafa;"></div><span class="t s" style="left:310.5px;top:472.8px;font-size:12.5px;line-height:16px;color:#222;letter-spacing:0.16px;">Receive Time</span><span class="t s" style="left:420.5px;top:472.8px;font-size:12.5px;line-height:16px;color:#222;letter-spacing:-0.04px;">Entry</span><div class="b" style="left:1359.5px;top:207.5px;width:5.0px;height:20.0px;background:#c8c8c8;border-radius:2.500px;"></div></div>
<div class="b" style="left:1389.7px;top:74.4px;width:424.8px;height:726.1px;overflow:hidden;"><div class="b" style="left:0.0px;top:0.0px;width:424.8px;height:726.1px;background:#141726;"></div><div class="b" style="left:5.3px;top:2.9px;width:74.4px;height:21.5px;background:#3b3b3b;border-radius:5px 5px 0 0;"></div><div class="b" style="left:1.3px;top:20.4px;width:4.0px;height:4.0px;background:radial-gradient(circle at 0 0,transparent 3.700px,#3b3b3b 4px);"></div><div class="b" style="left:79.7px;top:20.4px;width:4.0px;height:4.0px;background:radial-gradient(circle at 100% 0,transparent 3.700px,#3b3b3b 4px);"></div><svg class="b" style="left:14.3px;top:8.6px;" width="12" height="10" viewBox="0 0 12 10"><path d="M6 .5L1 7.500h10z" fill="#4a9be8"/><path d="M6 .5L3.500 7.500h5z" fill="#8cc6ff"/><path d="M.5 7.500h11L10 9.500H2z" fill="#f0c040"/></svg><span class="t s" style="left:30.3px;top:7.3px;font-size:11px;line-height:14px;color:#e8e8e8;letter-spacing:-0.98px;">ACE ...</span><svg class="b" style="left:66.3px;top:9.6px;" width="8" height="8" viewBox="0 0 8 8"><path d="M1 1l6 6M7 1L1 7" stroke="#bdbdbd" stroke-width="1"/></svg><div class="b" style="left:90.1px;top:8.9px;width:2.0px;height:2.0px;background:#d8d8d8;"></div><div class="b" style="left:90.1px;top:12.9px;width:2.0px;height:2.0px;background:#d8d8d8;"></div><div class="b" style="left:90.1px;top:16.9px;width:2.0px;height:2.0px;background:#d8d8d8;"></div><svg class="b" style="left:202.8px;top:6.6px;" width="12" height="13" viewBox="0 0 12 13"><path d="M7.500.5L2 6.500h3.500L3.500 12.500 10 6H6.500z" fill="#6f7fe8"/></svg><div class="b" style="left:211.6px;top:5.4px;width:4.4px;height:4.4px;background:#e5393c;border-radius:2.200px;"></div><svg class="b" style="left:227.3px;top:8.3px;" width="10.8" height="9.1" viewBox="0 0 13 11"><path d="M3 1.500h7l2 6.500a1.500 1.500 0 0 1-2.700 1L8.500 7.500h-4L3.700 9a1.500 1.500 0 0 1-2.700-1z" fill="none" stroke="#e4e4e8" stroke-width="1.100"/><path d="M4 3.500v2M3 4.500h2" stroke="#e4e4e8" stroke-width=".9"/><circle cx="9" cy="4.500" r=".8" fill="#e4e4e8"/></svg><svg class="b" style="left:253.1px;top:7.7px;" width="10.4" height="10.4" viewBox="0 0 12 12"><circle cx="6" cy="6" r="5.200" fill="none" stroke="#e4e4e8" stroke-width="1.100"/><circle cx="6" cy="4.800" r="1.800" fill="#e4e4e8"/><path d="M2.800 9.500a3.500 3.500 0 0 1 6.400 0z" fill="#e4e4e8"/></svg><svg class="b" style="left:279.0px;top:9.2px;" width="8.2" height="7.4" viewBox="0 0 10 9"><path d="M0 1h10M0 4.500h10M0 8h10" stroke="#e4e4e8" stroke-width="1.100"/></svg><svg class="b" style="left:303.7px;top:8.5px;" width="8.8" height="8.8" viewBox="0 0 11 11"><path d="M10 5V1H1v9h4" fill="none" stroke="#e4e4e8" stroke-width="1.100"/><path d="M6 6l4.500 4.500M10.500 7.500v3h-3" fill="none" stroke="#e4e4e8" stroke-width="1.100"/></svg><div class="b" style="left:329.3px;top:12.6px;width:7.2px;height:1.1px;background:#e4e4e8;"></div><div class="b" style="left:354.3px;top:8.5px;width:7.4px;height:8.0px;border:1.100px solid #e4e4e8;box-sizing:border-box;"></div><svg class="b" style="left:378.5px;top:8.6px;" width="8" height="8" viewBox="0 0 10 10"><path d="M.5.5l9 9M9.500.5l-9 9" stroke="#e4e4e8" stroke-width="1.100"/></svg><svg class="b" style="left:405.8px;top:8.6px;" width="9" height="9" viewBox="0 0 10 10"><path d="M4.500 1L1 5l3.500 4M9 1L5.500 5 9 9" fill="none" stroke="#e4e4e8" stroke-width="1.100"/></svg><div class="b" style="left:0.0px;top:24.4px;width:395.3px;height:701.7px;background:#01245b;"></div><span class="t s" style="left:7.2px;top:29.0px;font-size:15.5px;line-height:20px;color:#ffffff;letter-spacing:-0.04px;-webkit-text-stroke:.3px #fff;">3:47</span><span class="t s" style="left:50.5px;top:27.1px;font-size:18.5px;line-height:24px;color:#ffffff;font-weight:bold;">G</span><div class="b" style="left:76.3px;top:33.1px;width:11.0px;height:11.0px;background:#ffffff;border-radius:1px;"></div><span class="t s" style="left:78.9px;top:33.8px;font-size:8px;line-height:10px;color:#01245b;font-weight:bold;">A</span><svg class="b" style="left:98.6px;top:31.1px;" width="15" height="15" viewBox="0 0 15 15"><path d="M7.500 1C5.500 4 1.500 5.500 1.500 8.800a3 3 0 0 0 5.300 1.800L6 14h3l-.800-3.400a3 3 0 0 0 5.300-1.800C13.500 5.500 9.500 4 7.500 1z" fill="#fff"/></svg><svg class="b" style="left:122.8px;top:30.6px;" width="16" height="16" viewBox="0 0 16 16"><path d="M2 1.500l12 6.500-12 6.500z" fill="none" stroke="#fff" stroke-width="1.400" stroke-linejoin="round"/><path d="M2 1.500l8 10M2 14.500l8-10" stroke="#fff" stroke-width="1.300"/></svg><svg class="b" style="left:338.3px;top:30.6px;" width="17" height="13.8" viewBox="0 0 16 12"><path d="M8 11.500L.5 3a11 11 0 0 1 15 0z" fill="#fff"/></svg><svg class="b" style="left:357.6px;top:31.1px;" width="13.6" height="13.2" viewBox="0 0 12 12"><path d="M11.500.5v11H.5z" fill="#fff"/></svg><svg class="b" style="left:379.0px;top:29.5px;" width="9" height="15" viewBox="0 0 8 14"><path d="M2.500 0h3v1.500H8V14H0V1.500h2.500z" fill="#fff"/><path d="M4.800 3.500L2.300 8h1.500l-.6 3 2.500-4.500H4.200z" fill="#01245b"/></svg><div class="b" style="left:338.3px;top:73.8px;width:39.0px;height:26.4px;background:#0a3d96;border:1.200px solid #6ea0e0;border-radius:5px;box-sizing:border-box;"></div><span class="t s" style="left:345.3px;top:80.3px;font-size:10.5px;line-height:14px;color:#ffffff;letter-spacing:-0.64px;font-weight:bold;text-decoration:underline;">AUTO</span><div class="b" style="left:368.8px;top:78.6px;width:4.5px;height:4.5px;background:#e53935;border-radius:2.300px;"></div><svg class="b" style="left:347.8px;top:134.1px;" width="9" height="9" viewBox="0 0 10 9"><path d="M5 .8l1.200 2.600 2.800.300-2.100 1.900.6 2.800L5 7l-2.500 1.400.6-2.800L1 3.700l2.800-.3z" fill="none" stroke="#d6d67a" stroke-width="1" stroke-linejoin="round"/></svg><svg class="b" style="left:337.3px;top:143.1px;" width="9" height="9" viewBox="0 0 10 9"><path d="M5 .8l1.200 2.600 2.800.300-2.100 1.900.6 2.800L5 7l-2.500 1.400.6-2.800L1 3.700l2.800-.3z" fill="none" stroke="#d6d67a" stroke-width="1" stroke-linejoin="round"/></svg><svg class="b" style="left:358.3px;top:143.1px;" width="9" height="9" viewBox="0 0 10 9"><path d="M5 .8l1.200 2.600 2.800.300-2.100 1.900.6 2.800L5 7l-2.500 1.400.6-2.800L1 3.700l2.800-.3z" fill="none" stroke="#d6d67a" stroke-width="1" stroke-linejoin="round"/></svg><svg class="b" style="left:341.3px;top:154.1px;" width="9" height="9" viewBox="0 0 10 9"><path d="M5 .8l1.200 2.600 2.800.300-2.100 1.900.6 2.800L5 7l-2.500 1.400.6-2.800L1 3.700l2.800-.3z" fill="none" stroke="#d6d67a" stroke-width="1" stroke-linejoin="round"/></svg><svg class="b" style="left:354.8px;top:154.1px;" width="9" height="9" viewBox="0 0 10 9"><path d="M5 .8l1.200 2.600 2.800.300-2.100 1.900.6 2.800L5 7l-2.500 1.400.6-2.800L1 3.700l2.800-.3z" fill="none" stroke="#d6d67a" stroke-width="1" stroke-linejoin="round"/></svg><span class="t s" style="left:326.3px;top:170.9px;font-size:13px;line-height:17px;color:#e6ecf5;">点评应用</span><svg class="b" style="left:338.3px;top:208.6px;" width="28" height="26" viewBox="0 0 28 26"><circle cx="4" cy="13" r="3.200" fill="none" stroke="#e6ecf5" stroke-width="1.200"/><circle cx="23" cy="4" r="3.200" fill="none" stroke="#e6ecf5" stroke-width="1.200"/><circle cx="23" cy="22" r="3.200" fill="none" stroke="#e6ecf5" stroke-width="1.200"/><path d="M7.200 13H15L20.700 6.200M15 13l5.700 6.800" fill="none" stroke="#e6ecf5" stroke-width="1.200"/></svg><span class="t s" style="left:339.3px;top:243.4px;font-size:13px;line-height:17px;color:#e6ecf5;letter-spacing:-0.25px;">分享</span><div class="b" style="left:115.0px;top:159.9px;width:165.2px;height:165.2px;background:#03306e;border:2.600px solid #fff;border-radius:50%;box-sizing:border-box;"></div><span class="t s" style="left:166.8px;top:214.0px;font-size:47px;line-height:61px;color:#ffffff;transform:scaleX(.856);transform-origin:0 50%;">GO</span><span class="t s" style="left:18.3px;top:392.2px;font-size:16.5px;line-height:21px;color:#c9d8ee;letter-spacing:0.07px;">渠道协议</span><div class="b" style="left:15.8px;top:426.6px;width:21.0px;height:21.0px;border:2.300px solid #e6e89a;border-radius:50%;box-sizing:border-box;"></div><div class="b" style="left:20.8px;top:431.6px;width:11.0px;height:11.0px;background:#e6e89a;border-radius:50%;"></div><div class="b" style="left:110.5px;top:426.6px;width:21.0px;height:21.0px;border:2px solid #7787a8;border-radius:50%;box-sizing:border-box;"></div><div class="b" style="left:204.4px;top:426.6px;width:21.0px;height:21.0px;border:2px solid #7787a8;border-radius:50%;box-sizing:border-box;"></div><div class="b" style="left:298.7px;top:426.6px;width:21.0px;height:21.0px;border:2px solid #7787a8;border-radius:50%;box-sizing:border-box;"></div><span class="t s" style="left:45.3px;top:428.9px;font-size:13px;line-height:17px;color:#dfe6e0;letter-spacing:-0.12px;">自动选择</span><span class="t s" style="left:139.1px;top:428.9px;font-size:13px;line-height:17px;color:#dfe6e0;letter-spacing:-0.16px;">协议A</span><span class="t s" style="left:233.3px;top:428.9px;font-size:13px;line-height:17px;color:#dfe6e0;letter-spacing:-0.22px;">协议B</span><span class="t s" style="left:327.3px;top:428.9px;font-size:13px;line-height:17px;color:#dfe6e0;letter-spacing:-0.46px;">协议C</span><div class="b" style="left:23.9px;top:487.6px;width:108.0px;height:85.0px;background:#04306f;border:1.400px solid #dfe8d8;border-radius:5px;box-sizing:border-box;"></div><div class="b" style="left:143.8px;top:487.6px;width:108.0px;height:85.0px;background:#04306f;border:1.400px solid #dfe8d8;border-radius:5px;box-sizing:border-box;"></div><div class="b" style="left:263.7px;top:487.6px;width:108.0px;height:85.0px;background:#04306f;border:1.400px solid #dfe8d8;border-radius:5px;box-sizing:border-box;"></div><svg class="b" style="left:62.8px;top:494.1px;" width="30" height="28" viewBox="0 0 30 28"><ellipse cx="15" cy="4.500" rx="13" ry="3.500" fill="none" stroke="#d0dff0" stroke-width="1.100"/><path d="M2.500 6.500L12 16.500v8l5.500 2.500V16.500L27.500 6.500" fill="none" stroke="#d0dff0" stroke-width="1.100" stroke-linejoin="round"/></svg><svg class="b" style="left:183.3px;top:494.6px;" width="28" height="28" viewBox="0 0 28 28"><rect x="9.500" y="1" width="9" height="8" rx="1" fill="none" stroke="#d0dff0" stroke-width="1.100"/><rect x="1" y="19" width="9" height="8" rx="1" fill="none" stroke="#d0dff0" stroke-width="1.100"/><rect x="18" y="19" width="9" height="8" rx="1" fill="none" stroke="#d0dff0" stroke-width="1.100"/><path d="M14 9v5M5.500 19v-5h17v5" fill="none" stroke="#d0dff0" stroke-width="1.100"/></svg><svg class="b" style="left:302.3px;top:498.1px;" width="30" height="20" viewBox="0 0 30 20"><path d="M1.500 8a19 19 0 0 1 27 0M5.500 12a13.500 13.500 0 0 1 19 0M9.500 15.500a8 8 0 0 1 11 0" fill="none" stroke="#d0dff0" stroke-width="1.100" stroke-dasharray="2.500 1.200"/><circle cx="15" cy="18" r="1.600" fill="none" stroke="#d0dff0" stroke-width="1"/><path d="M12.500 3l5 5M17.500 3l-5 5" stroke="#d0dff0" stroke-width="1"/></svg><span class="t s" style="left:51.8px;top:538.7px;font-size:13px;line-height:17px;color:#f0f4f8;font-weight:500;">隧道分离</span><span class="t s" style="left:171.6px;top:538.7px;font-size:13px;line-height:17px;color:#f0f4f8;font-weight:500;">网络检查</span><span class="t s" style="left:291.5px;top:538.7px;font-size:13px;line-height:17px;color:#f0f4f8;font-weight:500;">提交问题</span><svg class="b" style="left:403.1px;top:31.0px;" width="14.4" height="14.4" viewBox="0 0 16 16"><path d="M4.300 1.800h7.400L15.200 8l-3.500 6.200H4.300L.8 8z" fill="none" stroke="#e4e4ea" stroke-width="1.200"/><circle cx="8" cy="8" r="1.700" fill="#e4e4ea"/></svg><svg class="b" style="left:403.1px;top:56.4px;" width="14.4" height="14.4" viewBox="0 0 16 16"><rect x="1" y="2.500" width="14" height="11" fill="none" stroke="#e4e4ea" stroke-width="1.200"/><path d="M3.500 5.500h1.500M6.500 5.500h1.500M9.500 5.500h1.500M3.500 8h1.500M6.500 8h1.500M9.500 8h1.500M12 5.500h1M12 8h1M4 11h8" stroke="#e4e4ea" stroke-width="1.300"/></svg><svg class="b" style="left:403.1px;top:83.0px;" width="14.4" height="14.4" viewBox="0 0 16 16"><path d="M1 5.500h3L8.500 2.500v11L4 10.500H1z" fill="none" stroke="#e4e4ea" stroke-width="1.200" stroke-linejoin="round"/><path d="M11 8h3.500M12.800 6.200v3.600" stroke="#e4e4ea" stroke-width="1.100"/></svg><svg class="b" style="left:403.1px;top:109.4px;" width="14.4" height="14.4" viewBox="0 0 16 16"><path d="M1 5.500h3L8.500 2.500v11L4 10.500H1z" fill="none" stroke="#e4e4ea" stroke-width="1.200" stroke-linejoin="round"/><path d="M11 8h3" stroke="#e4e4ea" stroke-width="1.100"/></svg><svg class="b" style="left:403.1px;top:136.0px;" width="14.4" height="14.4" viewBox="0 0 16 16"><path d="M1 5V2h3M12 2h3v3M15 11v3h-3M4 14H1v-3" fill="none" stroke="#e4e4ea" stroke-width="1.200"/><rect x="4" y="5" width="8" height="6" fill="none" stroke="#e4e4ea" stroke-width="1.200"/></svg><svg class="b" style="left:403.1px;top:162.4px;" width="14.4" height="14.4" viewBox="0 0 16 16"><path d="M2 6A6.500 6.500 0 0 1 14 5.200M14 10A6.500 6.500 0 0 1 2 10.800" fill="none" stroke="#e4e4ea" stroke-width="1.200"/><path d="M14.800 2.500v3.200h-3.200M1.200 13.500v-3.200h3.200" fill="none" stroke="#e4e4ea" stroke-width="1.100"/><path d="M5.800 11l2.200-6 2.200 6M6.500 9h3" fill="none" stroke="#e4e4ea" stroke-width="1"/></svg><svg class="b" style="left:403.1px;top:188.4px;" width="14.4" height="14.4" viewBox="0 0 16 16"><rect x="1" y="5" width="10.500" height="8.500" rx="1" fill="none" stroke="#e4e4ea" stroke-width="1.200"/><path d="M4 5V2.500h11V11h-3.500" fill="none" stroke="#e4e4ea" stroke-width="1.200"/><path d="M6.200 7v4.500M4 9.200h4.500" stroke="#e4e4ea" stroke-width="1.300"/></svg><svg class="b" style="left:403.1px;top:214.9px;" width="14.4" height="14.4" viewBox="0 0 16 16"><rect x="1" y="5.500" width="14" height="8.500" rx="1" fill="none" stroke="#e4e4ea" stroke-width="1.200"/><path d="M8 1v4M6.300 2.500L8 1l1.700 1.500" fill="none" stroke="#e4e4ea" stroke-width="1.100"/><path d="M3.500 12V8h1.500v2H3.500M7 12V8h1.500v2H7M10.500 8v4M12.500 8l-2 2 2 2" fill="none" stroke="#e4e4ea" stroke-width=".9"/></svg><svg class="b" style="left:403.1px;top:241.1px;" width="14.4" height="14.4" viewBox="0 0 16 16"><circle cx="4" cy="12.500" r="2.300" fill="none" stroke="#e4e4ea" stroke-width="1.200"/><circle cx="12" cy="12.500" r="2.300" fill="none" stroke="#e4e4ea" stroke-width="1.200"/><path d="M5.300 10.500L12 1.500M10.700 10.500L4 1.500" stroke="#e4e4ea" stroke-width="1.200"/></svg><svg class="b" style="left:403.1px;top:267.4px;" width="14.4" height="14.4" viewBox="0 0 16 16"><rect x="1" y="2" width="14" height="12" fill="none" stroke="#e4e4ea" stroke-width="1.200"/><path d="M10.500 2v12M10.500 6h4.500M10.500 10h4.500" stroke="#e4e4ea" stroke-width="1.100"/><path d="M4.500 5.500l3.500 2.500-3.500 2.500z" fill="#e4e4ea"/></svg><svg class="b" style="left:403.1px;top:293.8px;" width="14.4" height="14.4" viewBox="0 0 16 16"><rect x="1" y="2" width="14" height="12" fill="none" stroke="#e4e4ea" stroke-width="1.200"/><path d="M4.500 6.500h7M9.800 4.800l1.700 1.700M11.500 9.500h-7M6.200 11.200L4.500 9.500" fill="none" stroke="#e4e4ea" stroke-width="1.200"/></svg><svg class="b" style="left:403.1px;top:320.0px;" width="14.4" height="14.4" viewBox="0 0 16 16"><rect x="4.500" y="1.500" width="7" height="13" rx="1.200" fill="none" stroke="#e4e4ea" stroke-width="1.200"/><path d="M2.200 4.500a6 6 0 0 0 0 7M13.800 4.500a6 6 0 0 1 0 7" fill="none" stroke="#e4e4ea" stroke-width="1.100"/></svg><svg class="b" style="left:403.1px;top:346.4px;" width="14.4" height="14.4" viewBox="0 0 16 16"><path d="M1 13.500V2.500h5l1.500 2H15v9z M1 7h14" fill="none" stroke="#e4e4ea" stroke-width="1.200" stroke-linejoin="round"/></svg><svg class="b" style="left:403.1px;top:373.0px;" width="14.4" height="14.4" viewBox="0 0 16 16"><path d="M8 15S2.800 9.800 2.800 6.200a5.200 5.200 0 0 1 10.400 0C13.200 9.800 8 15 8 15z" fill="none" stroke="#e4e4ea" stroke-width="1.200"/><circle cx="8" cy="6.200" r="1.800" fill="none" stroke="#e4e4ea" stroke-width="1.100"/></svg><svg class="b" style="left:403.1px;top:399.0px;" width="14.4" height="14.4" viewBox="0 0 16 16"><rect x="4.800" y="2" width="6.400" height="12" rx="1" fill="none" stroke="#e4e4ea" stroke-width="1.200"/><path d="M2.500 3a8 8 0 0 0 0 10M13.500 3a8 8 0 0 1 0 10" fill="none" stroke="#e4e4ea" stroke-width="1.100"/></svg><svg class="b" style="left:403.1px;top:628.0px;" width="14.4" height="14.4" viewBox="0 0 16 16"><path d="M13 2v12L2.500 8z" fill="none" stroke="#e4e4ea" stroke-width="1.200" stroke-linejoin="round"/></svg><svg class="b" style="left:403.1px;top:660.4px;" width="14.4" height="14.4" viewBox="0 0 16 16"><circle cx="8" cy="8" r="5.800" fill="none" stroke="#e4e4ea" stroke-width="1.200"/></svg><svg class="b" style="left:403.1px;top:692.9px;" width="14.4" height="14.4" viewBox="0 0 16 16"><rect x="3" y="3" width="10" height="10" fill="none" stroke="#e4e4ea" stroke-width="1.200"/></svg></div>
<div class="b" style="left:24.4px;top:1013.8px;width:1871.3px;height:38.2px;background:#1c1c1c;background:linear-gradient(to right,#1c1c1c 0,#1d1e1f 35%,#1b1b1c 60%,#1d1b1e 75%,#1c1c1c 100%);"></div><div class="b" style="left:25.3px;top:1012.9px;width:31.0px;height:1.6px;background:#2a72c8;"></div><div class="b" style="left:25.5px;top:996.0px;width:1.2px;height:17.0px;background:#2a6db5;"></div><svg class="b" style="left:38.5px;top:1025.8px;" width="16" height="16" viewBox="0 0 16 16"><path d="M0 2.300l6.500-.9v6.200H0zM7.300 1.300L16 0v7.600H7.300zM0 8.400h6.500v6.200L0 13.700zM7.300 8.400H16V16l-8.700-1.300z" fill="#fff"/></svg><div class="b" style="left:69.3px;top:1015.5px;width:262.5px;height:36.5px;background:#f2f2f2;"></div><svg class="b" style="left:79.5px;top:1025.0px;" width="16" height="16" viewBox="0 0 16 16"><circle cx="9.500" cy="6.500" r="5" fill="none" stroke="#222" stroke-width="1.300"/><path d="M6 10L1.500 14.500" stroke="#222" stroke-width="1.400"/></svg><span class="t s" style="left:105.7px;top:1024.8px;font-size:13.5px;line-height:18px;color:#333;letter-spacing:0.15px;">搜索</span><svg class="b" style="left:255px;top:1015.500px" width="77" height="36.500" viewBox="255 1015.500 77 36.500"><path d="M261.500 1037c6-.500 12 1 25 4.300 8 2 12 2.300 18 2 12-.500 20-2 27.300-5.700" fill="none" stroke="#6f9a64" stroke-width="2.600" stroke-linecap="round"/><path d="M271 1037l-2.500 15M288.500 1042l-3 10M306 1044l-2 8M322 1030c1 4 4 6.500 9.800 8" fill="none" stroke="#6f9a64" stroke-width="1.400"/><g fill="#f2d678"><ellipse cx="266" cy="1045" rx="3.500" ry="1.100" transform="rotate(15 266 1045)"/><ellipse cx="266" cy="1048" rx="3.500" ry="1.100" transform="rotate(15 266 1048)"/><ellipse cx="272.500" cy="1045" rx="3" ry="1.100" transform="rotate(-25 272.500 1045)"/><ellipse cx="272.500" cy="1048.500" rx="3" ry="1.100" transform="rotate(-25 272.500 1048.500)"/><ellipse cx="284" cy="1046" rx="3.200" ry="1.100" transform="rotate(10 284 1046)"/><ellipse cx="284" cy="1049" rx="3.200" ry="1.100" transform="rotate(10 284 1049)"/><ellipse cx="290" cy="1047" rx="2.800" ry="1.100" transform="rotate(-40 290 1047)"/><ellipse cx="308.500" cy="1048.500" rx="2.800" ry="1" transform="rotate(-45 308.500 1048.500)"/><ellipse cx="326.500" cy="1033" rx="3" ry="1.100" transform="rotate(25 326.500 1033)"/><ellipse cx="325" cy="1035.500" rx="2.600" ry="1" transform="rotate(35 325 1035.500)"/></g><g fill="#8a5a2b"><circle cx="271.400" cy="1034.800" r="3.100"/><circle cx="267.700" cy="1040.700" r="2.600"/><circle cx="322.400" cy="1029" r="2.400"/><circle cx="322.700" cy="1036.800" r="2.200"/><circle cx="301.300" cy="1048.200" r="2.300"/></g><path d="M298.500 1031C297.500 1022 301 1016.800 307.500 1016.800C314 1016.800 318 1022 317.700 1027.500C317.500 1032 315 1035.500 312 1036.600C311.300 1033 310.500 1030.500 308.500 1029L305 1037Z" fill="#e27a33"/><path d="M312 1036.600c3-1.100 5.500-4.600 5.700-9.100 0-1.500-.200-3-.800-4.300.300 5.500-1.900 9.400-4.900 13.400z" fill="#c4521c"/><path d="M283.500 1027c4-1 9-.800 14 1.200 5 2 8 6 7.500 10.500-.300 3-2.500 5-6 5.200l-5.500.200c-1.500 0-2-.800-1-1.500l2-1.200c-2-1-4.500-1.500-6-1.200l-3.500 1.800-2.500.300c-1 0-1.200-.800-.300-1.300l3.300-2c-.800-2-1.500-4-1.500-5z" fill="#e38c4a"/><ellipse cx="299" cy="1037.500" rx="5.500" ry="5.800" fill="#e07f3c"/><path d="M276.200 1030.500c.500-3.500 3-6.500 6.500-6.800l.500-1.800 1.300 1.500.800-1.600 1 2.300c1.500 1 2.300 2.500 2.500 4.500l-3.500 3.500c-2.500 1.200-5 1.300-7 .400z" fill="#e38c4a"/><circle cx="280" cy="1027.600" r=".9" fill="#2a1a10"/></svg><svg class="b" style="left:344.0px;top:1025.8px;" width="18" height="16" viewBox="0 0 18 16"><rect x="3.500" y="3" width="9" height="10" fill="none" stroke="#fff" stroke-width="1.200"/><path d="M1 2v3M1 7v6M15 2v3M15 7v6M17.500 4v1.500M17.500 8v3" stroke="#fff" stroke-width="1.200"/></svg><svg class="b" style="left:389.0px;top:1024.8px;" width="22" height="18" viewBox="0 0 22 18"><path d="M1 2.500h7l2 2h11V16H1z" fill="#f4c13d"/><path d="M1 6h20v10.500H1z" fill="#fad65c"/><rect x="6" y="11.500" width="10" height="5" fill="#3b8ad9"/><rect x="8.500" y="13" width="5" height="3.500" fill="#fad65c"/></svg><div class="b" style="left:434.6px;top:1022.8px;width:22.0px;height:22.0px;background:#ffffff;border-radius:5px;"></div><svg class="b" style="left:436.6px;top:1024.8px;" width="18" height="18" viewBox="0 0 18 18"><circle cx="6" cy="10.500" r="3.600" fill="none" stroke="#2a7cf0" stroke-width="2"/><circle cx="12" cy="10.500" r="3.600" fill="none" stroke="#f0483e" stroke-width="2"/><circle cx="9" cy="6" r="3.600" fill="none" stroke="#18b2f0" stroke-width="2"/></svg><div class="b" style="left:469.0px;top:1013.8px;width:45.0px;height:38.2px;background:#3d3d3d;"></div><div class="b" style="left:469.0px;top:1050.0px;width:45.0px;height:2.0px;background:#8ab4e8;"></div><svg class="b" style="left:480.0px;top:1022.8px;" width="22" height="22" viewBox="0 0 22 22"><circle cx="11" cy="11" r="10.500" fill="#fff"/><path d="M11 .5a10.500 10.500 0 0 1 9.100 5.250H11A5.250 5.250 0 0 0 6.450 8.400L2.300 5.200A10.500 10.500 0 0 1 11 .5z" fill="#ea4335"/><path d="M20.100 5.750A10.500 10.500 0 0 1 10.400 21.500l5.100-7.900A5.250 5.250 0 0 0 16.250 11c0-2-.900-3.900-2.200-5.250z" fill="#fbbc04"/><path d="M2.300 5.200l4.500 8.200a5.250 5.250 0 0 0 6 2.700l-2.400 5.400A10.500 10.500 0 0 1 2.300 5.200z" fill="#34a853"/><circle cx="11" cy="11" r="4.800" fill="#fff"/><circle cx="11" cy="11" r="3.900" fill="#4285f4"/></svg><svg class="b" style="left:525.0px;top:1022.8px;" width="22" height="22" viewBox="0 0 22 22"><circle cx="12.500" cy="9" r="6.300" fill="none" stroke="#f57c14" stroke-width="3.200"/><path d="M8 14L2.500 20" stroke="#f57c14" stroke-width="3.600" stroke-linecap="round"/></svg><svg class="b" style="left:570.0px;top:1022.8px;" width="22" height="22" viewBox="0 0 22 22"><circle cx="11" cy="11" r="10" fill="#1b74c9"/><path d="M2 13c0-6 4-9.500 9-9.500 5.500 0 9 3.500 9 7.500 0 3-2.500 4.500-5 4.500-2 0-3-.800-3-2 0-1.500 1-1.500 1-3 0-1.500-1.500-2.500-3.500-2.500C6.500 8 3 10 2 13z" fill="#35c1a0"/><path d="M8 19.500C5 18 4 15 5 12c.500 4 4 6.500 8 6.500 2 0 4-.500 5.500-2-2 3.500-6.500 5-10.500 3z" fill="#0c4f9e"/></svg><svg class="b" style="left:615.0px;top:1023.8px;" width="24" height="20" viewBox="0 0 24 20"><ellipse cx="9" cy="8" rx="8" ry="6.800" fill="#2dc100"/><path d="M4.500 13l-1 3.500 3.800-2z" fill="#2dc100"/><ellipse cx="16.500" cy="12.500" rx="6.500" ry="5.500" fill="#e8e8e8"/><path d="M19.500 17l.800 2.600-3-1.600z" fill="#e8e8e8"/></svg><svg class="b" style="left:661.0px;top:1022.8px;" width="22" height="22" viewBox="0 0 22 22"><circle cx="11" cy="11" r="10" fill="#8a4fd6"/><path d="M11 4.500a6.500 6.500 0 0 0-2 12.700v-2.500c-1.500.300-2-.800-2.300-1.300 1 .300 1.500.800 2.300.500.100-.500.300-.800.600-1-2-.300-3.300-1.200-3.300-3.400 0-.800.300-1.500.700-2-.100-.500-.200-1.200.200-2 .800 0 1.500.500 2 .900a7 7 0 0 1 3.600 0c.500-.400 1.200-.900 2-.900.400.800.300 1.500.200 2 .400.500.700 1.200.700 2 0 2.200-1.300 3.100-3.300 3.400.400.400.600.900.600 1.600v2.700A6.500 6.500 0 0 0 11 4.500z" fill="#fff"/></svg><svg class="b" style="left:706.6px;top:1022.8px;" width="22" height="22" viewBox="0 0 22 22"><path d="M16 1L6.300 9.800 2.500 6.900 1 7.700v6.600l1.500.800 3.800-2.900L16 21l5-2.400V3.400z" fill="#2196e8"/><path d="M16 6.600v8.800L10.300 11z" fill="#1c1c1c"/><path d="M16 1l5 2.400v15.200L16 21z" fill="#35b0f5"/></svg><div class="b" style="left:700.0px;top:1050.0px;width:36.5px;height:2.0px;background:#8ab4e8;"></div><svg class="b" style="left:751.0px;top:1022.8px;" width="24" height="22" viewBox="0 0 24 22"><path d="M1.500 9.500c1-5 6-8 11.500-7.500 6 .500 10 5 9.500 10.500-.500 5-5 8.500-10 8-5.500-.500-8.500-4.500-10-9z" fill="#e5443f"/><path d="M1.500 9.500c3 3 5 7.500 10 10.800" fill="none" stroke="#b52a28" stroke-width="1.500"/><path d="M8.500 13c-1.500-4 1.500-7.500 5-7.300 3.500.200 5.500 3.500 4.500 6.300-1 2.500-4.500 3-5.800 1-.900-1.500.300-3.300 1.800-3" fill="none" stroke="#ffb0a8" stroke-width="1.800" stroke-linecap="round"/></svg><svg class="b" style="left:796.0px;top:1024.8px;" width="24" height="18" viewBox="0 0 24 18"><rect x=".5" y=".5" width="23" height="17" rx="1.500" fill="#3a3a3a" stroke="#8a8a8a"/><rect x=".5" y=".5" width="23" height="3.500" fill="#cfcfcf"/><path d="M4 8l4 3-4 3" fill="none" stroke="#fff" stroke-width="1.600"/><path d="M10 14.500h7" stroke="#fff" stroke-width="1.600"/></svg><svg class="b" style="left:842.0px;top:1022.8px;" width="22" height="22" viewBox="0 0 22 22"><circle cx="11" cy="11" r="10" fill="#1d2f8f"/><circle cx="11" cy="11" r="6.800" fill="none" stroke="#fff" stroke-width="2.400"/><path d="M11 6.500V11" stroke="#fff" stroke-width="2.200"/><circle cx="11" cy="11" r="2.500" fill="#1d2f8f"/><path d="M11 1.500V11" stroke="#1d2f8f" stroke-width="2.500"/><path d="M11 4v7.500" stroke="#fff" stroke-width="2"/></svg><svg class="b" style="left:886.6px;top:1022.8px;" width="24" height="22" viewBox="0 0 24 22"><circle cx="10" cy="9.500" r="7.500" fill="none" stroke="#1e88f0" stroke-width="2.600"/><path d="M4.500 15l-2 4.500 5-2" fill="#1e88f0"/><circle cx="17" cy="15" r="4" fill="none" stroke="#1e88f0" stroke-width="2.300"/><path d="M20 18l2.500 2.500" stroke="#f5a623" stroke-width="2.500" stroke-linecap="round"/><circle cx="17" cy="19.500" r="1.500" fill="#3cc13b"/></svg><svg class="b" style="left:932.0px;top:1022.8px;" width="24" height="22" viewBox="0 0 24 22"><rect x="7.500" y="2" width="14" height="12" rx="2" fill="none" stroke="#1e88d8" stroke-width="3"/><rect x="2.500" y="8" width="14" height="12" rx="2" fill="none" stroke="#f09a1a" stroke-width="3"/></svg><div class="b" style="left:925.0px;top:1050.0px;width:37.5px;height:2.0px;background:#8ab4e8;"></div><div class="b" style="left:967.0px;top:1013.8px;width:44.0px;height:38.2px;background:#323232;"></div><div class="b" style="left:978.0px;top:1022.9px;width:22.3px;height:22.3px;background:#ef3b3a;border-radius:1px;"></div><svg class="b" style="left:980.7px;top:1027.8px;" width="16" height="12" viewBox="0 0 16 12"><path d="M4.500 1l4 5-4 5-4-5z" fill="#fff"/><path d="M9 1l5 5-5 5 1.800-5z" fill="#fff"/></svg><div class="b" style="left:967.0px;top:1050.0px;width:44.0px;height:2.0px;background:#8ab4e8;"></div><div class="b" style="left:1024.0px;top:1023.3px;width:21.4px;height:20.9px;background:#f2c230;border-radius:5px;"></div><svg class="b" style="left:1026.5px;top:1025.5px;" width="16.5" height="16.5" viewBox="0 0 18 18"><circle cx="9.500" cy="8" r="5.800" fill="none" stroke="#222" stroke-width="2"/><path d="M9.500 5a3 3 0 1 1-3 3" fill="none" stroke="#222" stroke-width="1.800"/><path d="M4.500 12.500L2 16.500" stroke="#222" stroke-width="2.400" stroke-linecap="round"/></svg><div class="b" style="left:1016.0px;top:1050.0px;width:37.0px;height:2.0px;background:#8ab4e8;"></div><svg class="b" style="left:1708.6px;top:1029.6px;" width="12" height="8" viewBox="0 0 12 8"><path d="M1 7l5-5.500L11 7" fill="none" stroke="#fff" stroke-width="1.200"/></svg><svg class="b" style="left:1734.5px;top:1026.5px;" width="16" height="14" viewBox="0 0 16 14"><path d="M1 5h2.500L7 2v10L3.500 9H1z" fill="none" stroke="#fff" stroke-width="1.100" stroke-linejoin="round"/><path d="M9.500 4.500a4 4 0 0 1 0 5M11.800 2.800a6.500 6.500 0 0 1 0 8.400M14 1.200a9 9 0 0 1 0 11.600" fill="none" stroke="#fff" stroke-width="1"/></svg><span class="t s" style="left:1759.8px;top:1022.8px;font-size:16.5px;line-height:21px;color:#ffffff;">英</span><span class="t s" style="left:1798.0px;top:1018.2px;font-size:11.5px;line-height:15px;color:#ffffff;letter-spacing:0.04px;">15:47</span><span class="t s" style="left:1782.0px;top:1034.7px;font-size:11.5px;line-height:15px;color:#ffffff;letter-spacing:0.34px;">2024/10/15</span><svg class="b" style="left:1857.5px;top:1024.5px;" width="15" height="15" viewBox="0 0 15 15"><path d="M.5.5h14v11H8.500l-3 3v-3H.5z" fill="#fff"/><path d="M3 3.500h9M3 6h9M3 8.500h6" stroke="#1c1c1c" stroke-width="1"/></svg><div class="b" style="left:1865.0px;top:1034.0px;width:13.0px;height:13.0px;background:#1c1c1c;border:1.200px solid #d8d8d8;border-radius:50%;box-sizing:border-box;"></div><span class="t s" style="left:1868.7px;top:1034.2px;font-size:10px;line-height:13px;color:#ffffff;font-weight:bold;">1</span><div class="b" style="left:1891.0px;top:1018.0px;width:1.0px;height:30.0px;background:#484848;"></div>
</body></html>
